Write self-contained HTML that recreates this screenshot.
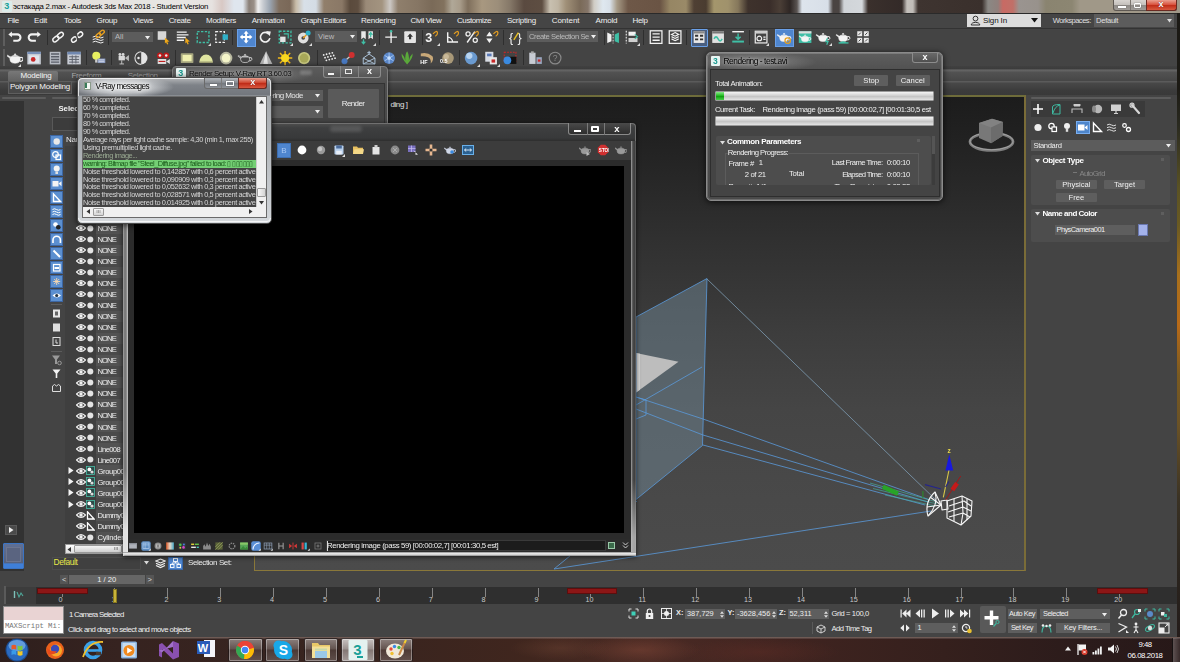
<!DOCTYPE html>
<html lang="ru"><head><meta charset="utf-8"><title>3ds Max</title>
<style>
html,body{margin:0;padding:0;}
body{width:1180px;height:662px;overflow:hidden;background:#444;position:relative;font-family:"Liberation Sans",sans-serif;}
#r{position:absolute;left:0;top:0;width:1180px;height:662px;overflow:hidden;filter:blur(0.45px);}
#r div,#r span,#r svg{position:absolute;box-sizing:border-box;}
#r span{white-space:pre;}
</style></head><body><div id="r">
<div style="left:0px;top:0px;width:1180px;height:13px;background:linear-gradient(90deg,#dedcd8 0px,#e8e6e3 170px,#e6e2e0 212px,#d8c8c4 222px,#dfe6ee 234px,#dfe6ee 243px,#8a8078 249px,#9a9088 254px,#f0f0f0 258px,#c8ccd2 263px,#9aa4b0 270px,#7f6e5e 279px,#7a6858 290px,#c8bca8 296px,#d8e0e8 304px,#d4dce4 316px,#917f6b 324px,#8a7866 342px,#5a4a3c 350px,#5e4e40 358px,#9a8a78 366px,#a39480 382px,#ccc8c4 390px,#8f7f6c 398px,#867664 418px,#7a6a58 432px,#82725e 444px,#b0a898 452px,#a89c8a 460px,#7f6f5c 468px,#a89880 482px,#9c8e7a 498px,#857868 510px,#5a4a40 524px,#5e4e42 542px,#c8c0b0 550px,#bfb5a3 558px,#a09078 566px,#7a6a58 580px,#85766a 588px,#d0ccc4 594px,#dfe8f0 603px,#d8e0e8 610px,#a69a86 617px,#6e5848 628px,#6a5444 660px,#968664 670px,#9a8a68 686px,#4f4034 694px,#4a3c30 706px,#a4966c 714px,#a0926c 728px,#86785c 738px,#3e322c 748px,#3a2e2a 770px,#4a3e36 780px,#2e2624 790px,#5a5452 797px,#dde4ec 802px,#d8dfe8 828px,#4a4442 833px,#4a4442 839px,#d0d4d8 844px,#d4d8dc 862px,#3a302c 868px,#332a28 902px,#c4c0bc 907px,#c0bcb8 913px,#3e3430 918px,#3a302c 982px,#8a8884 988px,#90807c 998px,#c86a64 1003px,#c07068 1013px,#9a9490 1019px,#98928c 1038px,#8a8470 1046px,#8c8672 1072px,#a09888 1080px,#a09888 1112px);"></div>
<div style="left:2px;top:1px;width:9.5px;height:10.5px;background:#dcecea;border-radius:1px;"></div>
<span style="left:4.2px;top:0.9px;font-size:9px;line-height:10.8px;color:#16a098;font-weight:700;">3</span>
<span style="left:13.0px;top:1.5px;font-size:7.8px;line-height:9.36px;color:#000;letter-spacing:-0.23px;">эстакада 2.max - Autodesk 3ds Max 2018 - Student Version</span>
<div style="left:1112.5px;top:0px;width:64px;height:10.5px;background:linear-gradient(#d8d4d0,#c4c0bc 48%,#8e8a86 52%,#a09c98);border:1px solid #5e5852;border-top:none;border-radius:0 0 3px 3px;"></div>
<div style="left:1146px;top:0px;width:30.5px;height:10.5px;background:linear-gradient(#eaa090,#d8503c 48%,#c02c18 52%,#d85a40);border:1px solid #6a2a22;border-top:none;border-radius:0 0 3px 0;"></div>
<div style="left:1129.5px;top:0px;width:1px;height:10px;background:#7a746e;"></div>
<div style="left:1118px;top:5.5px;width:7.5px;height:2px;background:#fff;box-shadow:0 0 1px #333;"></div>
<div style="left:1134px;top:2.5px;width:7px;height:5.5px;border:1.500px solid #fff;border-radius:1px;box-shadow:0 0 1px #333;"></div>
<span style="left:1158.5px;top:-0.6px;font-size:9px;line-height:10.8px;color:#fff;font-weight:700;text-shadow:0 0 1px #500;">x</span>
<div style="left:0px;top:12.5px;width:1180px;height:15px;background:#454545;border-top:1px solid #2a2a2a;"></div>
<span style="left:7.5px;top:15.8px;font-size:8px;line-height:9.6px;color:#f0f0f0;letter-spacing:-0.42px;">File</span>
<span style="left:34.0px;top:15.8px;font-size:8px;line-height:9.6px;color:#f0f0f0;letter-spacing:-0.20px;">Edit</span>
<span style="left:64.0px;top:15.8px;font-size:8px;line-height:9.6px;color:#f0f0f0;letter-spacing:-0.34px;">Tools</span>
<span style="left:96.6px;top:15.8px;font-size:8px;line-height:9.6px;color:#f0f0f0;letter-spacing:-0.37px;">Group</span>
<span style="left:133.0px;top:15.8px;font-size:8px;line-height:9.6px;color:#f0f0f0;letter-spacing:-0.24px;">Views</span>
<span style="left:168.7px;top:15.8px;font-size:8px;line-height:9.6px;color:#f0f0f0;letter-spacing:-0.37px;">Create</span>
<span style="left:206.0px;top:15.8px;font-size:8px;line-height:9.6px;color:#f0f0f0;letter-spacing:-0.27px;">Modifiers</span>
<span style="left:251.7px;top:15.8px;font-size:8px;line-height:9.6px;color:#f0f0f0;letter-spacing:-0.29px;">Animation</span>
<span style="left:300.7px;top:15.8px;font-size:8px;line-height:9.6px;color:#f0f0f0;letter-spacing:-0.31px;">Graph Editors</span>
<span style="left:361.0px;top:15.8px;font-size:8px;line-height:9.6px;color:#f0f0f0;letter-spacing:-0.26px;">Rendering</span>
<span style="left:410.5px;top:15.8px;font-size:8px;line-height:9.6px;color:#f0f0f0;letter-spacing:-0.35px;">Civil View</span>
<span style="left:457.0px;top:15.8px;font-size:8px;line-height:9.6px;color:#f0f0f0;letter-spacing:-0.42px;">Customize</span>
<span style="left:507.0px;top:15.8px;font-size:8px;line-height:9.6px;color:#f0f0f0;letter-spacing:-0.24px;">Scripting</span>
<span style="left:551.7px;top:15.8px;font-size:8px;line-height:9.6px;color:#f0f0f0;letter-spacing:-0.02px;">Content</span>
<span style="left:595.6px;top:15.8px;font-size:8px;line-height:9.6px;color:#f0f0f0;letter-spacing:-0.24px;">Arnold</span>
<span style="left:632.6px;top:15.8px;font-size:8px;line-height:9.6px;color:#f0f0f0;letter-spacing:-0.36px;">Help</span>
<div style="left:966.5px;top:13.5px;width:74.5px;height:13px;background:#dcdcdc;"></div>
<svg style="left:970px;top:14.5px;" width="11" height="11" viewBox="0 0 11 11"><circle cx="5.5" cy="3.6" r="2.4" fill="none" stroke="#333" stroke-width="1"/><path d="M1.2 10 C1.2 6.5 9.8 6.5 9.8 10Z" fill="none" stroke="#333" stroke-width="1"/></svg>
<span style="left:983.0px;top:15.5px;font-size:8px;line-height:9.6px;color:#111;letter-spacing:-0.13px;">Sign In</span>
<svg style="left:1031px;top:18px;" width="7" height="5" viewBox="0 0 7 5"><path d="M0 0H7L3.5 4.5Z" fill="#111"/></svg>
<span style="left:1052.7px;top:15.7px;font-size:7.6px;line-height:9.12px;color:#e0e0e0;letter-spacing:-0.52px;">Workspaces:</span>
<div style="left:1094px;top:14px;width:80px;height:12.5px;background:#5c5c5c;"></div>
<span style="left:1096.0px;top:15.7px;font-size:7.6px;line-height:9.12px;color:#e0e0e0;letter-spacing:-0.29px;">Default</span>
<svg style="left:1167px;top:19px;" width="5" height="4" viewBox="0 0 5 4"><path d="M0 0H5L2.5 3.5Z" fill="#ddd"/></svg>
<div style="left:0px;top:27.5px;width:1180px;height:40.5px;background:#444;"></div>
<div style="left:0px;top:27.5px;width:1180px;height:1px;background:#333;"></div>
<div style="left:3px;top:29px;width:2px;height:17px;background:#5e5e5e;"></div>
<div style="left:3px;top:49px;width:2px;height:17px;background:#5e5e5e;"></div>
<div style="left:3px;top:70px;width:2px;height:23px;background:#5a5a5a;"></div>
<div style="left:0px;top:66px;width:1180px;height:29px;background:linear-gradient(#404040 0,#3c3c3c 3px,#646464 3.8px,#626262 5px,#525252 6px,#4d4d4d 10px,#474747 14.5px,#5c5c5c 15.2px,#5a5a5a 16px,#484848 17px,#424242 21px,#3c3c3c 24px,#393939 29px);"></div>
<div style="left:8px;top:70.5px;width:49.5px;height:10px;background:linear-gradient(#787878,#636363);border-radius:2px 2px 0 0;"></div>
<span style="left:20.5px;top:70.5px;font-size:8px;line-height:9.6px;color:#f4f4f4;letter-spacing:-0.18px;">Modeling</span>
<span style="left:71.4px;top:70.5px;font-size:8px;line-height:9.6px;color:#a8a8a8;letter-spacing:-0.31px;">Freeform</span>
<span style="left:127.7px;top:70.5px;font-size:8px;line-height:9.6px;color:#a0a0a0;letter-spacing:-0.32px;">Selection</span>
<div style="left:8px;top:81px;width:64px;height:12.5px;background:#484848;border:1px solid #5e5e5e;"></div>
<span style="left:10.0px;top:81.9px;font-size:8px;line-height:9.6px;color:#f4f4f4;letter-spacing:-0.23px;">Polygon Modeling</span>
<div style="left:0px;top:98px;width:1180px;height:474px;background:#444;"></div>
<div style="left:0px;top:101px;width:24px;height:470px;background:#323232;"></div>
<div style="left:2px;top:97px;width:44px;height:2px;background:#5c5c5c;border-radius:1px;"></div>
<div style="left:52px;top:97px;width:70px;height:2px;background:#5c5c5c;border-radius:1px;"></div>
<span style="left:58.5px;top:103.6px;font-size:7.8px;line-height:9.36px;color:#f4f4f4;letter-spacing:-0.08px;font-weight:700;">Select</span>
<div style="left:52px;top:117px;width:76px;height:14px;background:#3c3c3c;border:1px solid #595959;"></div>
<span style="left:66.0px;top:135.2px;font-size:8px;line-height:9.6px;color:#eee;letter-spacing:-0.34px;">Name</span>
<div style="left:49.5px;top:135px;width:13.5px;height:13px;background:#5b8fd0;border:1px solid #3c66a3;"></div>
<div style="left:49.5px;top:149px;width:13.5px;height:13px;background:#5b8fd0;border:1px solid #3c66a3;"></div>
<div style="left:49.5px;top:163px;width:13.5px;height:13px;background:#5b8fd0;border:1px solid #3c66a3;"></div>
<div style="left:49.5px;top:177px;width:13.5px;height:13px;background:#5b8fd0;border:1px solid #3c66a3;"></div>
<div style="left:49.5px;top:191px;width:13.5px;height:13px;background:#5b8fd0;border:1px solid #3c66a3;"></div>
<div style="left:49.5px;top:205px;width:13.5px;height:13px;background:#5b8fd0;border:1px solid #3c66a3;"></div>
<div style="left:49.5px;top:219px;width:13.5px;height:13px;background:#5b8fd0;border:1px solid #3c66a3;"></div>
<div style="left:49.5px;top:233px;width:13.5px;height:13px;background:#5b8fd0;border:1px solid #3c66a3;"></div>
<div style="left:49.5px;top:247px;width:13.5px;height:13px;background:#5b8fd0;border:1px solid #3c66a3;"></div>
<div style="left:49.5px;top:261px;width:13.5px;height:13px;background:#5b8fd0;border:1px solid #3c66a3;"></div>
<div style="left:49.5px;top:275px;width:13.5px;height:13px;background:#5b8fd0;border:1px solid #3c66a3;"></div>
<div style="left:49.5px;top:289px;width:13.5px;height:13px;background:#5b8fd0;border:1px solid #3c66a3;"></div>
<svg style="left:49.5px;top:135px;" width="13.5" height="13" viewBox="0 0 13.5 13"><circle cx="6.7" cy="6.5" r="3.2" fill="#e8e8e8"/></svg>
<svg style="left:49.5px;top:149px;" width="13.5" height="13" viewBox="0 0 13.5 13"><circle cx="5.5" cy="5.5" r="2.8" fill="none" stroke="#fff" stroke-width="1.2"/><rect x="6" y="6" width="4.5" height="4.5" fill="none" stroke="#fff" stroke-width="1.2"/></svg>
<svg style="left:49.5px;top:163px;" width="13.5" height="13" viewBox="0 0 13.5 13"><circle cx="6.7" cy="5.5" r="3" fill="#f2f2f2"/><rect x="5.4" y="8.5" width="2.6" height="2.5" fill="#e0e0e0"/></svg>
<svg style="left:49.5px;top:177px;" width="13.5" height="13" viewBox="0 0 13.5 13"><rect x="2.5" y="4" width="6" height="5.5" fill="#f4f4f4"/><path d="M8.5 6.5L11.5 4.3V9.2Z" fill="#f4f4f4"/></svg>
<svg style="left:49.5px;top:191px;" width="13.5" height="13" viewBox="0 0 13.5 13"><path d="M3.5 3V10.5H10.5Z" fill="none" stroke="#fff" stroke-width="1.4"/></svg>
<svg style="left:49.5px;top:205px;" width="13.5" height="13" viewBox="0 0 13.5 13"><path d="M2.5 4.5q2-1.5 4 0t4 0M2.5 7q2-1.5 4 0t4 0M2.5 9.5q2-1.5 4 0t4 0" fill="none" stroke="#fff" stroke-width="1"/></svg>
<svg style="left:49.5px;top:219px;" width="13.5" height="13" viewBox="0 0 13.5 13"><circle cx="5.5" cy="5.5" r="2.3" fill="#fff"/><circle cx="8.3" cy="8.2" r="2.3" fill="#222"/></svg>
<svg style="left:49.5px;top:233px;" width="13.5" height="13" viewBox="0 0 13.5 13"><path d="M3 10V7a3.7 3.7 0 0 1 7.4 0V10" fill="none" stroke="#fff" stroke-width="1.6"/></svg>
<svg style="left:49.5px;top:247px;" width="13.5" height="13" viewBox="0 0 13.5 13"><path d="M3.5 3.5L10 10" stroke="#fff" stroke-width="2"/></svg>
<svg style="left:49.5px;top:261px;" width="13.5" height="13" viewBox="0 0 13.5 13"><rect x="3.5" y="3.5" width="6.5" height="6.5" fill="none" stroke="#fff" stroke-width="1.2"/><rect x="4.5" y="6" width="4.5" height="2" fill="#fff"/></svg>
<svg style="left:49.5px;top:275px;" width="13.5" height="13" viewBox="0 0 13.5 13"><path d="M6.7 3V10M3.2 6.5H10.2M4.2 4L9.2 9M9.2 4L4.2 9" stroke="#f8d8b0" stroke-width="0.9"/></svg>
<svg style="left:49.5px;top:289px;" width="13.5" height="13" viewBox="0 0 13.5 13"><path d="M2.5 6.5Q6.7 2.5 11 6.5Q6.7 10.5 2.5 6.5Z" fill="#fff"/><circle cx="6.7" cy="6.5" r="1.6" fill="#234"/></svg>
<div style="left:51px;top:304px;width:11px;height:1px;background:#5c5c5c;"></div>
<svg style="left:51px;top:308px;" width="11" height="11" viewBox="0 0 11 11"><rect x="2" y="1.5" width="7" height="8" fill="#e8e8e8"/><rect x="4" y="3.5" width="3" height="4" fill="#666"/></svg>
<svg style="left:51px;top:322px;" width="11" height="11" viewBox="0 0 11 11"><rect x="2" y="1.5" width="7" height="8" fill="#e0e0e0"/></svg>
<svg style="left:51px;top:336px;" width="11" height="11" viewBox="0 0 11 11"><rect x="2" y="1.5" width="7" height="8" fill="none" stroke="#ddd" stroke-width="1"/><path d="M5 3.5V7H7" stroke="#ddd" fill="none"/></svg>
<div style="left:51px;top:350.5px;width:11px;height:1px;background:#5c5c5c;"></div>
<svg style="left:51px;top:353.5px;" width="12" height="12" viewBox="0 0 12 12"><path d="M1 1.5H9L6 5.5V10H4V5.5Z" fill="#999"/><circle cx="8.5" cy="9" r="1.8" fill="none" stroke="#999" stroke-width="1"/></svg>
<svg style="left:51px;top:368px;" width="11" height="11" viewBox="0 0 11 11"><path d="M1.5 1.5H9.5L6.3 5.5V10H4.7V5.5Z" fill="#f4f4f4"/></svg>
<svg style="left:51px;top:382px;" width="11" height="11" viewBox="0 0 11 11"><path d="M1.5 9.5V4L3.5 2.5L5.5 4H5.5L7.5 2.5L9.5 4V9.5Z" fill="none" stroke="#ddd" stroke-width="1"/></svg>
<div style="left:65px;top:146px;width:58px;height:398px;background:#3f3f3f;"></div>
<div style="left:96px;top:222px;width:27px;height:322px;background:#4a4a4a;"></div>
<div style="left:96px;top:222.5px;width:27px;height:11px;background:#525252;"></div>
<svg style="left:76px;top:224px;" width="10" height="8" viewBox="0 0 10 8"><path d="M0.5 4Q5 -0.8 9.5 4Q5 8.8 0.5 4Z" fill="none" stroke="#f2f2f2" stroke-width="1.1"/><circle cx="5" cy="4" r="1.7" fill="#f2f2f2"/></svg>
<svg style="left:86px;top:223.5px;" width="9" height="9" viewBox="0 0 9 9"><circle cx="4.3" cy="4.5" r="3" fill="#e4e4e4"/></svg>
<span style="left:97.5px;top:223.7px;font-size:7.6px;line-height:9.12px;color:#f0f0f0;letter-spacing:-0.90px;">NONE</span>
<svg style="left:76px;top:235.04px;" width="10" height="8" viewBox="0 0 10 8"><path d="M0.5 4Q5 -0.8 9.5 4Q5 8.8 0.5 4Z" fill="none" stroke="#f2f2f2" stroke-width="1.1"/><circle cx="5" cy="4" r="1.7" fill="#f2f2f2"/></svg>
<svg style="left:86px;top:234.54px;" width="9" height="9" viewBox="0 0 9 9"><circle cx="4.3" cy="4.5" r="3" fill="#e4e4e4"/></svg>
<span style="left:97.5px;top:234.8px;font-size:7.6px;line-height:9.12px;color:#f0f0f0;letter-spacing:-0.90px;">NONE</span>
<div style="left:96px;top:244.58px;width:27px;height:11px;background:#525252;"></div>
<svg style="left:76px;top:246.08px;" width="10" height="8" viewBox="0 0 10 8"><path d="M0.5 4Q5 -0.8 9.5 4Q5 8.8 0.5 4Z" fill="none" stroke="#f2f2f2" stroke-width="1.1"/><circle cx="5" cy="4" r="1.7" fill="#f2f2f2"/></svg>
<svg style="left:86px;top:245.58px;" width="9" height="9" viewBox="0 0 9 9"><circle cx="4.3" cy="4.5" r="3" fill="#e4e4e4"/></svg>
<span style="left:97.5px;top:245.8px;font-size:7.6px;line-height:9.12px;color:#f0f0f0;letter-spacing:-0.90px;">NONE</span>
<svg style="left:76px;top:257.12px;" width="10" height="8" viewBox="0 0 10 8"><path d="M0.5 4Q5 -0.8 9.5 4Q5 8.8 0.5 4Z" fill="none" stroke="#f2f2f2" stroke-width="1.1"/><circle cx="5" cy="4" r="1.7" fill="#f2f2f2"/></svg>
<svg style="left:86px;top:256.62px;" width="9" height="9" viewBox="0 0 9 9"><circle cx="4.3" cy="4.5" r="3" fill="#e4e4e4"/></svg>
<span style="left:97.5px;top:256.9px;font-size:7.6px;line-height:9.12px;color:#f0f0f0;letter-spacing:-0.90px;">NONE</span>
<div style="left:96px;top:266.66px;width:27px;height:11px;background:#525252;"></div>
<svg style="left:76px;top:268.16px;" width="10" height="8" viewBox="0 0 10 8"><path d="M0.5 4Q5 -0.8 9.5 4Q5 8.8 0.5 4Z" fill="none" stroke="#f2f2f2" stroke-width="1.1"/><circle cx="5" cy="4" r="1.7" fill="#f2f2f2"/></svg>
<svg style="left:86px;top:267.66px;" width="9" height="9" viewBox="0 0 9 9"><circle cx="4.3" cy="4.5" r="3" fill="#e4e4e4"/></svg>
<span style="left:97.5px;top:267.9px;font-size:7.6px;line-height:9.12px;color:#f0f0f0;letter-spacing:-0.90px;">NONE</span>
<svg style="left:76px;top:279.2px;" width="10" height="8" viewBox="0 0 10 8"><path d="M0.5 4Q5 -0.8 9.5 4Q5 8.8 0.5 4Z" fill="none" stroke="#f2f2f2" stroke-width="1.1"/><circle cx="5" cy="4" r="1.7" fill="#f2f2f2"/></svg>
<svg style="left:86px;top:278.7px;" width="9" height="9" viewBox="0 0 9 9"><circle cx="4.3" cy="4.5" r="3" fill="#e4e4e4"/></svg>
<span style="left:97.5px;top:278.9px;font-size:7.6px;line-height:9.12px;color:#f0f0f0;letter-spacing:-0.90px;">NONE</span>
<div style="left:96px;top:288.74px;width:27px;height:11px;background:#525252;"></div>
<svg style="left:76px;top:290.24px;" width="10" height="8" viewBox="0 0 10 8"><path d="M0.5 4Q5 -0.8 9.5 4Q5 8.8 0.5 4Z" fill="none" stroke="#f2f2f2" stroke-width="1.1"/><circle cx="5" cy="4" r="1.7" fill="#f2f2f2"/></svg>
<svg style="left:86px;top:289.74px;" width="9" height="9" viewBox="0 0 9 9"><circle cx="4.3" cy="4.5" r="3" fill="#e4e4e4"/></svg>
<span style="left:97.5px;top:290.0px;font-size:7.6px;line-height:9.12px;color:#f0f0f0;letter-spacing:-0.90px;">NONE</span>
<svg style="left:76px;top:301.28px;" width="10" height="8" viewBox="0 0 10 8"><path d="M0.5 4Q5 -0.8 9.5 4Q5 8.8 0.5 4Z" fill="none" stroke="#f2f2f2" stroke-width="1.1"/><circle cx="5" cy="4" r="1.7" fill="#f2f2f2"/></svg>
<svg style="left:86px;top:300.78px;" width="9" height="9" viewBox="0 0 9 9"><circle cx="4.3" cy="4.5" r="3" fill="#e4e4e4"/></svg>
<span style="left:97.5px;top:301.0px;font-size:7.6px;line-height:9.12px;color:#f0f0f0;letter-spacing:-0.90px;">NONE</span>
<div style="left:96px;top:310.82px;width:27px;height:11px;background:#525252;"></div>
<svg style="left:76px;top:312.32px;" width="10" height="8" viewBox="0 0 10 8"><path d="M0.5 4Q5 -0.8 9.5 4Q5 8.8 0.5 4Z" fill="none" stroke="#f2f2f2" stroke-width="1.1"/><circle cx="5" cy="4" r="1.7" fill="#f2f2f2"/></svg>
<svg style="left:86px;top:311.82px;" width="9" height="9" viewBox="0 0 9 9"><circle cx="4.3" cy="4.5" r="3" fill="#e4e4e4"/></svg>
<span style="left:97.5px;top:312.1px;font-size:7.6px;line-height:9.12px;color:#f0f0f0;letter-spacing:-0.90px;">NONE</span>
<svg style="left:76px;top:323.36px;" width="10" height="8" viewBox="0 0 10 8"><path d="M0.5 4Q5 -0.8 9.5 4Q5 8.8 0.5 4Z" fill="none" stroke="#f2f2f2" stroke-width="1.1"/><circle cx="5" cy="4" r="1.7" fill="#f2f2f2"/></svg>
<svg style="left:86px;top:322.86px;" width="9" height="9" viewBox="0 0 9 9"><circle cx="4.3" cy="4.5" r="3" fill="#e4e4e4"/></svg>
<span style="left:97.5px;top:323.1px;font-size:7.6px;line-height:9.12px;color:#f0f0f0;letter-spacing:-0.90px;">NONE</span>
<div style="left:96px;top:332.9px;width:27px;height:11px;background:#525252;"></div>
<svg style="left:76px;top:334.4px;" width="10" height="8" viewBox="0 0 10 8"><path d="M0.5 4Q5 -0.8 9.5 4Q5 8.8 0.5 4Z" fill="none" stroke="#f2f2f2" stroke-width="1.1"/><circle cx="5" cy="4" r="1.7" fill="#f2f2f2"/></svg>
<svg style="left:86px;top:333.9px;" width="9" height="9" viewBox="0 0 9 9"><circle cx="4.3" cy="4.5" r="3" fill="#e4e4e4"/></svg>
<span style="left:97.5px;top:334.1px;font-size:7.6px;line-height:9.12px;color:#f0f0f0;letter-spacing:-0.90px;">NONE</span>
<svg style="left:76px;top:345.44px;" width="10" height="8" viewBox="0 0 10 8"><path d="M0.5 4Q5 -0.8 9.5 4Q5 8.8 0.5 4Z" fill="none" stroke="#f2f2f2" stroke-width="1.1"/><circle cx="5" cy="4" r="1.7" fill="#f2f2f2"/></svg>
<svg style="left:86px;top:344.94px;" width="9" height="9" viewBox="0 0 9 9"><circle cx="4.3" cy="4.5" r="3" fill="#e4e4e4"/></svg>
<span style="left:97.5px;top:345.2px;font-size:7.6px;line-height:9.12px;color:#f0f0f0;letter-spacing:-0.90px;">NONE</span>
<div style="left:96px;top:354.98px;width:27px;height:11px;background:#525252;"></div>
<svg style="left:76px;top:356.48px;" width="10" height="8" viewBox="0 0 10 8"><path d="M0.5 4Q5 -0.8 9.5 4Q5 8.8 0.5 4Z" fill="none" stroke="#f2f2f2" stroke-width="1.1"/><circle cx="5" cy="4" r="1.7" fill="#f2f2f2"/></svg>
<svg style="left:86px;top:355.98px;" width="9" height="9" viewBox="0 0 9 9"><circle cx="4.3" cy="4.5" r="3" fill="#e4e4e4"/></svg>
<span style="left:97.5px;top:356.2px;font-size:7.6px;line-height:9.12px;color:#f0f0f0;letter-spacing:-0.90px;">NONE</span>
<svg style="left:76px;top:367.52px;" width="10" height="8" viewBox="0 0 10 8"><path d="M0.5 4Q5 -0.8 9.5 4Q5 8.8 0.5 4Z" fill="none" stroke="#f2f2f2" stroke-width="1.1"/><circle cx="5" cy="4" r="1.7" fill="#f2f2f2"/></svg>
<svg style="left:86px;top:367.02px;" width="9" height="9" viewBox="0 0 9 9"><circle cx="4.3" cy="4.5" r="3" fill="#e4e4e4"/></svg>
<span style="left:97.5px;top:367.3px;font-size:7.6px;line-height:9.12px;color:#f0f0f0;letter-spacing:-0.90px;">NONE</span>
<div style="left:96px;top:377.06px;width:27px;height:11px;background:#525252;"></div>
<svg style="left:76px;top:378.56px;" width="10" height="8" viewBox="0 0 10 8"><path d="M0.5 4Q5 -0.8 9.5 4Q5 8.8 0.5 4Z" fill="none" stroke="#f2f2f2" stroke-width="1.1"/><circle cx="5" cy="4" r="1.7" fill="#f2f2f2"/></svg>
<svg style="left:86px;top:378.06px;" width="9" height="9" viewBox="0 0 9 9"><circle cx="4.3" cy="4.5" r="3" fill="#e4e4e4"/></svg>
<span style="left:97.5px;top:378.3px;font-size:7.6px;line-height:9.12px;color:#f0f0f0;letter-spacing:-0.90px;">NONE</span>
<svg style="left:76px;top:389.6px;" width="10" height="8" viewBox="0 0 10 8"><path d="M0.5 4Q5 -0.8 9.5 4Q5 8.8 0.5 4Z" fill="none" stroke="#f2f2f2" stroke-width="1.1"/><circle cx="5" cy="4" r="1.7" fill="#f2f2f2"/></svg>
<svg style="left:86px;top:389.1px;" width="9" height="9" viewBox="0 0 9 9"><circle cx="4.3" cy="4.5" r="3" fill="#e4e4e4"/></svg>
<span style="left:97.5px;top:389.3px;font-size:7.6px;line-height:9.12px;color:#f0f0f0;letter-spacing:-0.90px;">NONE</span>
<div style="left:96px;top:399.14px;width:27px;height:11px;background:#525252;"></div>
<svg style="left:76px;top:400.64px;" width="10" height="8" viewBox="0 0 10 8"><path d="M0.5 4Q5 -0.8 9.5 4Q5 8.8 0.5 4Z" fill="none" stroke="#f2f2f2" stroke-width="1.1"/><circle cx="5" cy="4" r="1.7" fill="#f2f2f2"/></svg>
<svg style="left:86px;top:400.14px;" width="9" height="9" viewBox="0 0 9 9"><circle cx="4.3" cy="4.5" r="3" fill="#e4e4e4"/></svg>
<span style="left:97.5px;top:400.4px;font-size:7.6px;line-height:9.12px;color:#f0f0f0;letter-spacing:-0.90px;">NONE</span>
<svg style="left:76px;top:411.68px;" width="10" height="8" viewBox="0 0 10 8"><path d="M0.5 4Q5 -0.8 9.5 4Q5 8.8 0.5 4Z" fill="none" stroke="#f2f2f2" stroke-width="1.1"/><circle cx="5" cy="4" r="1.7" fill="#f2f2f2"/></svg>
<svg style="left:86px;top:411.18px;" width="9" height="9" viewBox="0 0 9 9"><circle cx="4.3" cy="4.5" r="3" fill="#e4e4e4"/></svg>
<span style="left:97.5px;top:411.4px;font-size:7.6px;line-height:9.12px;color:#f0f0f0;letter-spacing:-0.90px;">NONE</span>
<div style="left:96px;top:421.22px;width:27px;height:11px;background:#525252;"></div>
<svg style="left:76px;top:422.72px;" width="10" height="8" viewBox="0 0 10 8"><path d="M0.5 4Q5 -0.8 9.5 4Q5 8.8 0.5 4Z" fill="none" stroke="#f2f2f2" stroke-width="1.1"/><circle cx="5" cy="4" r="1.7" fill="#f2f2f2"/></svg>
<svg style="left:86px;top:422.22px;" width="9" height="9" viewBox="0 0 9 9"><circle cx="4.3" cy="4.5" r="3" fill="#e4e4e4"/></svg>
<span style="left:97.5px;top:422.5px;font-size:7.6px;line-height:9.12px;color:#f0f0f0;letter-spacing:-0.90px;">NONE</span>
<svg style="left:76px;top:433.76px;" width="10" height="8" viewBox="0 0 10 8"><path d="M0.5 4Q5 -0.8 9.5 4Q5 8.8 0.5 4Z" fill="none" stroke="#f2f2f2" stroke-width="1.1"/><circle cx="5" cy="4" r="1.7" fill="#f2f2f2"/></svg>
<svg style="left:86px;top:433.26px;" width="9" height="9" viewBox="0 0 9 9"><circle cx="4.3" cy="4.5" r="3" fill="#e4e4e4"/></svg>
<span style="left:97.5px;top:433.5px;font-size:7.6px;line-height:9.12px;color:#f0f0f0;letter-spacing:-0.90px;">NONE</span>
<div style="left:96px;top:443.3px;width:27px;height:11px;background:#525252;"></div>
<svg style="left:76px;top:444.8px;" width="10" height="8" viewBox="0 0 10 8"><path d="M0.5 4Q5 -0.8 9.5 4Q5 8.8 0.5 4Z" fill="none" stroke="#f2f2f2" stroke-width="1.1"/><circle cx="5" cy="4" r="1.7" fill="#f2f2f2"/></svg>
<svg style="left:86px;top:444.3px;" width="9" height="9" viewBox="0 0 9 9"><circle cx="4.3" cy="4.5" r="3" fill="#e4e4e4"/></svg>
<span style="left:97.5px;top:444.5px;font-size:7.6px;line-height:9.12px;color:#f0f0f0;letter-spacing:-0.65px;">Line008</span>
<svg style="left:76px;top:455.84px;" width="10" height="8" viewBox="0 0 10 8"><path d="M0.5 4Q5 -0.8 9.5 4Q5 8.8 0.5 4Z" fill="none" stroke="#f2f2f2" stroke-width="1.1"/><circle cx="5" cy="4" r="1.7" fill="#f2f2f2"/></svg>
<svg style="left:86px;top:455.34px;" width="9" height="9" viewBox="0 0 9 9"><circle cx="4.3" cy="4.5" r="3" fill="#e4e4e4"/></svg>
<span style="left:97.5px;top:455.6px;font-size:7.6px;line-height:9.12px;color:#f0f0f0;letter-spacing:-0.65px;">Line007</span>
<div style="left:96px;top:465.38px;width:27px;height:11px;background:#525252;"></div>
<svg style="left:76px;top:466.88px;" width="10" height="8" viewBox="0 0 10 8"><path d="M0.5 4Q5 -0.8 9.5 4Q5 8.8 0.5 4Z" fill="none" stroke="#f2f2f2" stroke-width="1.1"/><circle cx="5" cy="4" r="1.7" fill="#f2f2f2"/></svg>
<svg style="left:68px;top:467.38px;" width="6" height="7" viewBox="0 0 6 7"><path d="M0.5 0L5.5 3.5L0.5 7Z" fill="#f4f4f4"/></svg>
<svg style="left:86px;top:466.38px;" width="9" height="9" viewBox="0 0 9 9"><rect x="0.5" y="0.5" width="8" height="8" fill="#2e4a48" stroke="#4ac0a8" stroke-width="0.8"/><circle cx="3.4" cy="3.4" r="1.9" fill="#fff"/><circle cx="6" cy="6" r="1.6" fill="#ddd"/></svg>
<span style="left:97.5px;top:466.6px;font-size:7.6px;line-height:9.12px;color:#f0f0f0;letter-spacing:-0.37px;">Group00</span>
<svg style="left:76px;top:477.92px;" width="10" height="8" viewBox="0 0 10 8"><path d="M0.5 4Q5 -0.8 9.5 4Q5 8.8 0.5 4Z" fill="none" stroke="#f2f2f2" stroke-width="1.1"/><circle cx="5" cy="4" r="1.7" fill="#f2f2f2"/></svg>
<svg style="left:68px;top:478.42px;" width="6" height="7" viewBox="0 0 6 7"><path d="M0.5 0L5.5 3.5L0.5 7Z" fill="#f4f4f4"/></svg>
<svg style="left:86px;top:477.42px;" width="9" height="9" viewBox="0 0 9 9"><rect x="0.5" y="0.5" width="8" height="8" fill="#2e4a48" stroke="#4ac0a8" stroke-width="0.8"/><circle cx="3.4" cy="3.4" r="1.9" fill="#fff"/><circle cx="6" cy="6" r="1.6" fill="#ddd"/></svg>
<span style="left:97.5px;top:477.7px;font-size:7.6px;line-height:9.12px;color:#f0f0f0;letter-spacing:-0.37px;">Group00</span>
<div style="left:96px;top:487.46px;width:27px;height:11px;background:#525252;"></div>
<svg style="left:76px;top:488.96px;" width="10" height="8" viewBox="0 0 10 8"><path d="M0.5 4Q5 -0.8 9.5 4Q5 8.8 0.5 4Z" fill="none" stroke="#f2f2f2" stroke-width="1.1"/><circle cx="5" cy="4" r="1.7" fill="#f2f2f2"/></svg>
<svg style="left:68px;top:489.46px;" width="6" height="7" viewBox="0 0 6 7"><path d="M0.5 0L5.5 3.5L0.5 7Z" fill="#f4f4f4"/></svg>
<svg style="left:86px;top:488.46px;" width="9" height="9" viewBox="0 0 9 9"><rect x="0.5" y="0.5" width="8" height="8" fill="#2e4a48" stroke="#4ac0a8" stroke-width="0.8"/><circle cx="3.4" cy="3.4" r="1.9" fill="#fff"/><circle cx="6" cy="6" r="1.6" fill="#ddd"/></svg>
<span style="left:97.5px;top:488.7px;font-size:7.6px;line-height:9.12px;color:#f0f0f0;letter-spacing:-0.37px;">Group00</span>
<svg style="left:76px;top:500px;" width="10" height="8" viewBox="0 0 10 8"><path d="M0.5 4Q5 -0.8 9.5 4Q5 8.8 0.5 4Z" fill="none" stroke="#f2f2f2" stroke-width="1.1"/><circle cx="5" cy="4" r="1.7" fill="#f2f2f2"/></svg>
<svg style="left:68px;top:500.5px;" width="6" height="7" viewBox="0 0 6 7"><path d="M0.5 0L5.5 3.5L0.5 7Z" fill="#f4f4f4"/></svg>
<svg style="left:86px;top:499.5px;" width="9" height="9" viewBox="0 0 9 9"><rect x="0.5" y="0.5" width="8" height="8" fill="#2e4a48" stroke="#4ac0a8" stroke-width="0.8"/><circle cx="3.4" cy="3.4" r="1.9" fill="#fff"/><circle cx="6" cy="6" r="1.6" fill="#ddd"/></svg>
<span style="left:97.5px;top:499.7px;font-size:7.6px;line-height:9.12px;color:#f0f0f0;letter-spacing:-0.37px;">Group00</span>
<div style="left:96px;top:509.54px;width:27px;height:11px;background:#525252;"></div>
<svg style="left:76px;top:511.04px;" width="10" height="8" viewBox="0 0 10 8"><path d="M0.5 4Q5 -0.8 9.5 4Q5 8.8 0.5 4Z" fill="none" stroke="#f2f2f2" stroke-width="1.1"/><circle cx="5" cy="4" r="1.7" fill="#f2f2f2"/></svg>
<svg style="left:86px;top:510.54px;" width="9" height="9" viewBox="0 0 9 9"><path d="M1.5 0.8V8H8.2Z" fill="none" stroke="#fff" stroke-width="1.3"/></svg>
<span style="left:97.5px;top:510.8px;font-size:7.6px;line-height:9.12px;color:#f0f0f0;letter-spacing:-0.65px;">Dummy0</span>
<svg style="left:76px;top:522.08px;" width="10" height="8" viewBox="0 0 10 8"><path d="M0.5 4Q5 -0.8 9.5 4Q5 8.8 0.5 4Z" fill="none" stroke="#f2f2f2" stroke-width="1.1"/><circle cx="5" cy="4" r="1.7" fill="#f2f2f2"/></svg>
<svg style="left:86px;top:521.58px;" width="9" height="9" viewBox="0 0 9 9"><path d="M1.5 0.8V8H8.2Z" fill="none" stroke="#fff" stroke-width="1.3"/></svg>
<span style="left:97.5px;top:521.8px;font-size:7.6px;line-height:9.12px;color:#f0f0f0;letter-spacing:-0.65px;">Dummy0</span>
<div style="left:96px;top:531.62px;width:27px;height:11px;background:#525252;"></div>
<svg style="left:76px;top:533.12px;" width="10" height="8" viewBox="0 0 10 8"><path d="M0.5 4Q5 -0.8 9.5 4Q5 8.8 0.5 4Z" fill="none" stroke="#f2f2f2" stroke-width="1.1"/><circle cx="5" cy="4" r="1.7" fill="#f2f2f2"/></svg>
<svg style="left:86px;top:532.62px;" width="9" height="9" viewBox="0 0 9 9"><circle cx="4.3" cy="4.5" r="3" fill="#e4e4e4"/></svg>
<span style="left:97.5px;top:532.9px;font-size:7.6px;line-height:9.12px;color:#f0f0f0;letter-spacing:-0.23px;">Cylinder</span>
<div style="left:123px;top:222px;width:2px;height:322px;background:#6a6a6a;"></div>
<div style="left:65px;top:544px;width:58px;height:10px;background:linear-gradient(#fdfdfd,#dcdcdc);border:1px solid #9a9a9a;"></div>
<svg style="left:67px;top:546.5px;" width="4" height="5" viewBox="0 0 4 5"><path d="M4 0V5L0.5 2.5Z" fill="#333"/></svg>
<div style="left:74px;top:545px;width:48px;height:8px;background:linear-gradient(#f4f4f4,#cfcfcf);border:1px solid #999;border-radius:1px;"></div>
<span style="left:113.5px;top:545.0px;font-size:6px;line-height:7.2px;color:#666;">ııı</span>
<div style="left:4.5px;top:525px;width:12px;height:10px;background:#4a4a4a;border:1px solid #5a5a5a;"></div>
<svg style="left:8px;top:527px;" width="6" height="6" viewBox="0 0 6 6"><path d="M1 0L5.5 3L1 6Z" fill="#eee"/></svg>
<div style="left:3px;top:543px;width:21px;height:26px;background:linear-gradient(#5f6f94 0,#55627f 80%,#3f7fd8 82%,#3f7fd8);border:1px solid #3b74c4;border-radius:1px;"></div>
<div style="left:6px;top:547px;width:15px;height:15px;background:#5a6480;border:1px solid #6c7590;"></div>
<div style="left:52px;top:556.5px;width:89px;height:13px;background:#404040;border:1px solid #4c4c4c;"></div>
<span style="left:53.5px;top:557.3px;font-size:8.4px;line-height:10.08px;color:#e8e84a;letter-spacing:-0.36px;">Default</span>
<svg style="left:143.5px;top:561px;" width="5" height="4" viewBox="0 0 5 4"><path d="M0 0H5L2.5 3.5Z" fill="#ddd"/></svg>
<svg style="left:155px;top:557.5px;" width="11" height="11" viewBox="0 0 11 11"><path d="M5.5 1L10 3L5.5 5L1 3Z M1 5.3L5.5 7.3L10 5.3 M1 7.6L5.5 9.6L10 7.6" fill="none" stroke="#f0f0f0" stroke-width="1.1"/></svg>
<div style="left:168px;top:556.5px;width:15px;height:13px;background:#4f86cf;border:1px solid #3a68a8;"></div>
<svg style="left:170px;top:558px;" width="11" height="10" viewBox="0 0 11 10"><rect x="3.5" y="0.5" width="4" height="3" fill="none" stroke="#fff" stroke-width="0.9"/><rect x="0.5" y="6.5" width="3.5" height="3" fill="none" stroke="#fff" stroke-width="0.9"/><rect x="7" y="6.5" width="3.5" height="3" fill="none" stroke="#fff" stroke-width="0.9"/><path d="M5.5 3.5V5H2.2V6.5M5.5 5H8.8V6.5" stroke="#fff" fill="none" stroke-width="0.9"/></svg>
<span style="left:188.0px;top:557.5px;font-size:8px;line-height:9.6px;color:#eee;letter-spacing:-0.42px;">Selection Set:</span>
<div style="left:254px;top:94.5px;width:772px;height:476.5px;background:linear-gradient(#1c1c1c 0,#222 10%,#303030 30%,#3d3d3d 50%,#454545 66%,#494949 85%,#4b4b4b 100%);border:1.5px solid #8a783a;border-right:2px solid #7a6c38;border-top:2px solid #6e6c3a;"></div>
<span style="left:390.5px;top:100.2px;font-size:8px;line-height:9.6px;color:#e0e0e0;letter-spacing:-0.43px;">ding ]</span>
<svg style="left:125px;top:97px;" width="901" height="474" viewBox="0 0 901 474">
<polygon points="511,220 582,181.500 577.500,348.500 511,402.500" fill="#6b808c" fill-opacity="0.55"/>
<polygon points="511,256 553.500,264.700 511,295.600" fill="#bdbdbd"/><polygon points="511,256 515,256.800 515,292.800 511,295.600" fill="#d6d6d6"/>
<g fill="none" stroke="#5a9ada" stroke-width="0.9" stroke-opacity="0.9">
<path d="M511,402.500 L511,220 L582,181.500 L577.500,348.500 L511,402.500"/>
<path d="M577,270 L511,308"/>
<path d="M511,300 L578,322 L805,403"/>
<path d="M511,312 L578,338 L803,405"/>
<path d="M578,348 L800,408"/>
<path d="M429,472 L512,404"/>
<path d="M429,472 L806,414"/>
<path d="M511,300 L521,303 L521,318 L511,322"/>
</g>

<path d="M745,386 L812,405 M748,391.500 L812,407 M760,398 L810,409" stroke="#45b0a0" stroke-width="0.800" fill="none" stroke-opacity=".8"/>
<path d="M757.800,389.800 L773,396.600" stroke="#28a428" stroke-width="4.500"/>
<path d="M582,182 L812,404" stroke="#7f9db4" stroke-width="0.800" fill="none"/>
<!-- camera -->
<g fill="none" stroke="#f6f6f6" stroke-width="1.100" stroke-linejoin="round">
<path d="M816,408 L810,395 Q799,405 803,419 Z"/>
<path d="M816,408 L805,400 M816,408 L802,410 M810,395 Q814,407 803,419"/>
<path d="M816,404 L822,403 L823,412 L817,413 Z"/>
<path d="M822,404 L837,399 L847,404 L846,419 L836,428 L822,421 Z"/>
<path d="M824,409 L839,404 L846,409 M823,415 L838,410 L846,414 M824,420 L838,416 L845,420 M837,399 L838,416 L836,428 M829,402 L829,424 M842,402 L842,423"/>
</g>
<!-- gizmo -->
<path d="M824,373 L818.300,400.400" stroke="#d8c84a" stroke-width="1.100"/>
<path d="M824.300,357.400 L828.200,373.400 L820.400,373.400 Z" fill="#1818e0"/>
<path d="M800,387.600 L816,392 M820.500,390 L824,384.500" stroke="#26268a" stroke-width="1.100"/>
<path d="M797.900,394 L797.900,401" stroke="#2a8a2a" stroke-width="1.100"/>
<path d="M820.600,403 L835.700,379" stroke="#a01818" stroke-width="1"/>
<path d="M827.300,393 L832,386.300" stroke="#c41a1a" stroke-width="4.600"/>
<!-- viewcube -->
<ellipse cx="866.5" cy="44.8" rx="21.5" ry="8.6" fill="none" stroke="#7c7c7c" stroke-width="2.8"/>
<ellipse cx="866.5" cy="44.2" rx="21.5" ry="8.6" fill="none" stroke="#b0b0b0" stroke-width="0.7"/>
<path d="M854,26 L867,21.8 L878,25 L877.5,39 L866,46.3 L854,41 Z" fill="#787878"/>
<path d="M854,26 L867,21.8 L878,25 L866,30.5 Z" fill="#828282"/>
<path d="M866,30.5 L878,25 L877.5,39 L866,46.3 Z" fill="#6c6c6c"/>
<text x="822.500" y="356" font-size="6.500" font-weight="700" fill="#e8d84a" font-family="Liberation Sans, sans-serif">z</text></svg>
<div style="left:1026px;top:97px;width:154px;height:476px;background:#444;"></div>
<div style="left:1031px;top:97px;width:140px;height:2px;background:#5c5c5c;border-radius:1px;"></div>
<div style="left:1031px;top:101px;width:113.5px;height:16px;background:#3a3a3a;"></div>
<svg style="left:1031px;top:101px;" width="114" height="16" viewBox="0 0 114 16">
<path d="M7 3V13M2 8H12" stroke="#fff" stroke-width="1.6"/>
<path d="M21.5 13V6Q21.5 3.5 29 3.5V13Z" fill="none" stroke="#3fb8a0" stroke-width="1"/><path d="M22 12Q24 5 29 4" fill="none" stroke="#3fb8a0" stroke-width="1"/>
<path d="M42 4H50M41 12V8H51V12" stroke="#bbb" fill="none" stroke-width="1.1"/><rect x="43" y="3" width="6" height="2.5" fill="#ccc"/>
<circle cx="67" cy="8" r="4.2" fill="#b8b8b8"/><ellipse cx="63" cy="8" rx="2" ry="3.5" fill="#8a8a8a"/>
<rect x="80" y="3.5" width="10" height="6.5" fill="#d0d0d0"/><path d="M83 12.5H87M85 10V12.5" stroke="#d0d0d0" stroke-width="1.2"/>
<path d="M101 4L108 12" stroke="#d8d8d8" stroke-width="2.2" stroke-linecap="round"/><circle cx="101" cy="4.2" r="2" fill="none" stroke="#d8d8d8" stroke-width="1.2"/>
</svg>
<div style="left:1075.5px;top:120.5px;width:14px;height:13.5px;background:#4e86cc;border:1px solid #79aef0;"></div>
<svg style="left:1031px;top:119px;" width="114" height="17" viewBox="0 0 114 17">
<circle cx="7" cy="8.5" r="3.6" fill="#eee"/>
<circle cx="20.5" cy="7" r="2.7" fill="none" stroke="#fff" stroke-width="1.3"/><rect x="21" y="8" width="4.5" height="4.5" fill="#444" stroke="#fff" stroke-width="1.2"/>
<circle cx="36" cy="7" r="3" fill="#f0f0f0"/><rect x="34.8" y="10" width="2.4" height="2.8" fill="#ddd"/>
<rect x="47" y="5.5" width="6.5" height="6" fill="#fff"/><path d="M53.5 8.5L56.5 6V11Z" fill="#fff"/>
<path d="M62.5 4V12.5H70.5Z" fill="none" stroke="#fff" stroke-width="1.4"/>
<path d="M76 6q2.2-1.6 4.5 0t4.500 0M76 8.700q2.2-1.6 4.5 0t4.500 0M76 11.4q2.2-1.6 4.5 0t4.500 0" fill="none" stroke="#eee" stroke-width="0.9"/>
<circle cx="93.500" cy="6.5" r="1.8" fill="none" stroke="#fff" stroke-width="1.2"/><circle cx="97.500" cy="10.5" r="2" fill="none" stroke="#fff" stroke-width="1.3"/>
</svg>
<div style="left:1031px;top:139.5px;width:143.5px;height:11.5px;background:#5c5c5c;"></div>
<span style="left:1033.5px;top:140.9px;font-size:7.6px;line-height:9.12px;color:#eee;letter-spacing:-0.35px;">Standard</span>
<svg style="left:1165.5px;top:143.5px;" width="5" height="4" viewBox="0 0 5 4"><path d="M0 0H5L2.5 3.5Z" fill="#eee"/></svg>
<div style="left:1031px;top:154.5px;width:139px;height:50.5px;background:#4d4d4d;border-radius:2px;"></div>
<svg style="left:1035px;top:158.5px;" width="5" height="4" viewBox="0 0 5 4"><path d="M0 0H5L2.5 3.5Z" fill="#ddd"/></svg>
<span style="left:1042.5px;top:155.8px;font-size:8px;line-height:9.6px;color:#fff;letter-spacing:-0.38px;font-weight:700;">Object Type</span>
<div style="left:1161px;top:158px;width:3px;height:3px;background:#5e5e5e;"></div>
<div style="left:1073px;top:172px;width:4px;height:1px;background:#777;"></div>
<span style="left:1079.4px;top:168.6px;font-size:7.6px;line-height:9.12px;color:#888;letter-spacing:-0.56px;">AutoGrid</span>
<div style="left:1056px;top:180px;width:40.6px;height:9px;background:#5e5e5e;border-radius:1px;"></div>
<span style="left:1062.2px;top:180.1px;font-size:7.6px;line-height:9.12px;color:#f0f0f0;">Physical</span>
<div style="left:1104.3px;top:180px;width:40.6px;height:9px;background:#5e5e5e;border-radius:1px;"></div>
<span style="left:1114.0px;top:180.1px;font-size:7.6px;line-height:9.12px;color:#f0f0f0;">Target</span>
<div style="left:1056px;top:192.8px;width:40.6px;height:9px;background:#5e5e5e;border-radius:1px;"></div>
<span style="left:1068.5px;top:192.9px;font-size:7.6px;line-height:9.12px;color:#f0f0f0;">Free</span>
<div style="left:1031px;top:208.5px;width:139px;height:33px;background:#4d4d4d;border-radius:2px;"></div>
<svg style="left:1035px;top:212px;" width="5" height="4" viewBox="0 0 5 4"><path d="M0 0H5L2.5 3.5Z" fill="#ddd"/></svg>
<span style="left:1042.5px;top:209.4px;font-size:8px;line-height:9.6px;color:#fff;letter-spacing:-0.49px;font-weight:700;">Name and Color</span>
<div style="left:1161px;top:211.5px;width:3px;height:3px;background:#5e5e5e;"></div>
<div style="left:1055px;top:225.4px;width:79.5px;height:9.5px;background:#5e5e5e;"></div>
<span style="left:1056.5px;top:225.8px;font-size:7.4px;line-height:8.88px;color:#f0f0f0;letter-spacing:-0.54px;">PhysCamera001</span>
<div style="left:1137.7px;top:223.7px;width:10px;height:12.3px;background:#a3b2ea;border:1px solid #6a78b0;"></div>
<div style="left:0px;top:571.5px;width:1180px;height:66px;background:#444;"></div>
<div style="left:60.3px;top:574.5px;width:8px;height:9.5px;background:#555;"></div>
<span style="left:62.1px;top:574.8px;font-size:7.5px;line-height:9px;color:#ddd;">&lt;</span>
<div style="left:69px;top:574.5px;width:75.5px;height:9.5px;background:#666;"></div>
<span style="left:97.2px;top:574.7px;font-size:7.6px;line-height:9.12px;color:#f0f0f0;">1 / 20</span>
<div style="left:145.5px;top:574.5px;width:8.5px;height:9.5px;background:#555;"></div>
<span style="left:147.5px;top:574.8px;font-size:7.5px;line-height:9px;color:#ddd;">&gt;</span>
<div style="left:4px;top:586px;width:2px;height:18px;background:#5a5a5a;"></div>
<div style="left:35.5px;top:587px;width:1144.5px;height:16.5px;background:#2f2f2f;"></div>
<div style="left:6px;top:587px;width:29.5px;height:16.5px;background:#3c3c3c;"></div>
<svg style="left:13px;top:590px;" width="12" height="9" viewBox="0 0 12 9"><path d="M1.5 1V8" stroke="#7fbfb8" stroke-width="1.4"/><path d="M4 2L6 7L8 3L10 6" stroke="#4fa89a" stroke-width="1.1" fill="none"/></svg>
<div style="left:61.6px;top:587.5px;width:1px;height:9.5px;background:#858585;"></div>
<span style="left:58.6px;top:595.5px;font-size:7.2px;line-height:8.64px;color:#c8c8c8;">0</span>
<div style="left:114.48px;top:587.5px;width:1px;height:9.5px;background:#858585;"></div>
<span style="left:111.5px;top:595.5px;font-size:7.2px;line-height:8.64px;color:#c8c8c8;">1</span>
<div style="left:167.36px;top:587.5px;width:1px;height:9.5px;background:#858585;"></div>
<span style="left:164.4px;top:595.5px;font-size:7.2px;line-height:8.64px;color:#c8c8c8;">2</span>
<div style="left:220.24px;top:587.5px;width:1px;height:9.5px;background:#858585;"></div>
<span style="left:217.2px;top:595.5px;font-size:7.2px;line-height:8.64px;color:#c8c8c8;">3</span>
<div style="left:273.12px;top:587.5px;width:1px;height:9.5px;background:#858585;"></div>
<span style="left:270.1px;top:595.5px;font-size:7.2px;line-height:8.64px;color:#c8c8c8;">4</span>
<div style="left:326px;top:587.5px;width:1px;height:9.5px;background:#858585;"></div>
<span style="left:323.0px;top:595.5px;font-size:7.2px;line-height:8.64px;color:#c8c8c8;">5</span>
<div style="left:378.88px;top:587.5px;width:1px;height:9.5px;background:#858585;"></div>
<span style="left:375.9px;top:595.5px;font-size:7.2px;line-height:8.64px;color:#c8c8c8;">6</span>
<div style="left:431.76px;top:587.5px;width:1px;height:9.5px;background:#858585;"></div>
<span style="left:428.8px;top:595.5px;font-size:7.2px;line-height:8.64px;color:#c8c8c8;">7</span>
<div style="left:484.64px;top:587.5px;width:1px;height:9.5px;background:#858585;"></div>
<span style="left:481.6px;top:595.5px;font-size:7.2px;line-height:8.64px;color:#c8c8c8;">8</span>
<div style="left:537.52px;top:587.5px;width:1px;height:9.5px;background:#858585;"></div>
<span style="left:534.5px;top:595.5px;font-size:7.2px;line-height:8.64px;color:#c8c8c8;">9</span>
<div style="left:590.4px;top:587.5px;width:1px;height:9.5px;background:#858585;"></div>
<span style="left:585.4px;top:595.5px;font-size:7.2px;line-height:8.64px;color:#c8c8c8;">10</span>
<div style="left:643.28px;top:587.5px;width:1px;height:9.5px;background:#858585;"></div>
<span style="left:638.5px;top:595.5px;font-size:7.2px;line-height:8.64px;color:#c8c8c8;">11</span>
<div style="left:696.16px;top:587.5px;width:1px;height:9.5px;background:#858585;"></div>
<span style="left:691.2px;top:595.5px;font-size:7.2px;line-height:8.64px;color:#c8c8c8;">12</span>
<div style="left:749.04px;top:587.5px;width:1px;height:9.5px;background:#858585;"></div>
<span style="left:744.0px;top:595.5px;font-size:7.2px;line-height:8.64px;color:#c8c8c8;">13</span>
<div style="left:801.92px;top:587.5px;width:1px;height:9.5px;background:#858585;"></div>
<span style="left:796.9px;top:595.5px;font-size:7.2px;line-height:8.64px;color:#c8c8c8;">14</span>
<div style="left:854.8px;top:587.5px;width:1px;height:9.5px;background:#858585;"></div>
<span style="left:849.8px;top:595.5px;font-size:7.2px;line-height:8.64px;color:#c8c8c8;">15</span>
<div style="left:907.68px;top:587.5px;width:1px;height:9.5px;background:#858585;"></div>
<span style="left:902.7px;top:595.5px;font-size:7.2px;line-height:8.64px;color:#c8c8c8;">16</span>
<div style="left:960.56px;top:587.5px;width:1px;height:9.5px;background:#858585;"></div>
<span style="left:955.6px;top:595.5px;font-size:7.2px;line-height:8.64px;color:#c8c8c8;">17</span>
<div style="left:1013.44px;top:587.5px;width:1px;height:9.5px;background:#858585;"></div>
<span style="left:1008.4px;top:595.5px;font-size:7.2px;line-height:8.64px;color:#c8c8c8;">18</span>
<div style="left:1066.32px;top:587.5px;width:1px;height:9.5px;background:#858585;"></div>
<span style="left:1061.3px;top:595.5px;font-size:7.2px;line-height:8.64px;color:#c8c8c8;">19</span>
<div style="left:1119.2px;top:587.5px;width:1px;height:9.5px;background:#858585;"></div>
<span style="left:1114.2px;top:595.5px;font-size:7.2px;line-height:8.64px;color:#c8c8c8;">20</span>
<div style="left:36.9px;top:588px;width:50.8px;height:6.3px;background:#8c1616;border:1px solid #5c0e0e;"></div>
<div style="left:566.5px;top:588px;width:50.8px;height:6.3px;background:#8c1616;border:1px solid #5c0e0e;"></div>
<div style="left:1096.5px;top:588px;width:51px;height:6.3px;background:#8c1616;border:1px solid #5c0e0e;"></div>
<div style="left:113px;top:588.5px;width:4px;height:14px;background:#c8b43a;border:1px solid #8a7a20;"></div>
<div style="left:3px;top:606.3px;width:60.5px;height:28px;background:#ffffff;border:1px solid #8a8a8a;"></div>
<div style="left:4px;top:607.3px;width:58.5px;height:12.5px;background:#e9d3d3;"></div>
<span style="left:5.0px;top:622.4px;font-size:7.3px;line-height:8.76px;color:#777;letter-spacing:-0.07px;font-family:'Liberation Mono', monospace;">MAXScript Mi:</span>
<span style="left:69.0px;top:609.7px;font-size:7.8px;line-height:9.36px;color:#f0f0f0;letter-spacing:-0.72px;">1 Camera Selected</span>
<span style="left:68.0px;top:625.0px;font-size:7.8px;line-height:9.36px;color:#f0f0f0;letter-spacing:-0.53px;">Click and drag to select and move objects</span>
<svg style="left:628px;top:608px;" width="11" height="11" viewBox="0 0 11 11"><path d="M1 3.500V1H3.500M7.500 1H10V3.500M10 7.500V10H7.500M3.500 10H1V7.500" stroke="#ddd" fill="none" stroke-width="1"/><rect x="3.500" y="3.500" width="4" height="4" fill="#3fd0b8"/></svg>
<svg style="left:644.5px;top:607.5px;" width="9" height="12" viewBox="0 0 9 12"><rect x="0.800" y="5" width="7.400" height="6" fill="#f0f0f0"/><path d="M2.300 5V3.200a2.200 2.200 0 0 1 4.400 0V5" fill="none" stroke="#f0f0f0" stroke-width="1.2"/><circle cx="4.500" cy="8" r="1" fill="#444"/></svg>
<svg style="left:660.5px;top:608px;" width="11" height="11" viewBox="0 0 11 11"><rect x="0.500" y="0.500" width="10" height="10" fill="none" stroke="#eee" stroke-width="1"/><circle cx="5.500" cy="5.500" r="2.500" fill="#eee"/><path d="M5.500 1V10M1 5.500H10" stroke="#eee" stroke-width="0.800"/></svg>
<span style="left:676.0px;top:609.4px;font-size:7.4px;line-height:8.88px;color:#e8e8e8;font-weight:700;">X:</span>
<div style="left:685px;top:609px;width:40px;height:9.5px;background:#5e5e5e;"></div>
<span style="left:687.0px;top:609.5px;font-size:7.4px;line-height:8.88px;color:#eee;">387,729</span>
<svg style="left:720px;top:610.5px;" width="4" height="7" viewBox="0 0 4 7"><path d="M0 2.800L2 0.300L4 2.800ZM0 4.200L2 6.700L4 4.200Z" fill="#ddd"/></svg>
<span style="left:727.5px;top:609.4px;font-size:7.4px;line-height:8.88px;color:#e8e8e8;font-weight:700;">Y:</span>
<div style="left:735px;top:609px;width:41.5px;height:9.5px;background:#5e5e5e;"></div>
<span style="left:737.0px;top:609.5px;font-size:7.4px;line-height:8.88px;color:#eee;">-3628,456</span>
<svg style="left:771.5px;top:610.5px;" width="4" height="7" viewBox="0 0 4 7"><path d="M0 2.800L2 0.300L4 2.800ZM0 4.200L2 6.700L4 4.200Z" fill="#ddd"/></svg>
<span style="left:779.0px;top:609.4px;font-size:7.4px;line-height:8.88px;color:#e8e8e8;font-weight:700;">Z:</span>
<div style="left:787.5px;top:609px;width:41.5px;height:9.5px;background:#5e5e5e;"></div>
<span style="left:789.5px;top:609.5px;font-size:7.4px;line-height:8.88px;color:#eee;">52,311</span>
<svg style="left:824px;top:610.5px;" width="4" height="7" viewBox="0 0 4 7"><path d="M0 2.800L2 0.300L4 2.800ZM0 4.200L2 6.700L4 4.200Z" fill="#ddd"/></svg>
<span style="left:831.5px;top:609.3px;font-size:7.6px;line-height:9.12px;color:#eee;letter-spacing:-0.38px;">Grid = 100,0</span>
<svg style="left:816px;top:624px;" width="10" height="10" viewBox="0 0 10 10"><path d="M5 1L9 3V7L5 9L1 7V3ZM1 3L5 5L9 3M5 5V9" fill="none" stroke="#ddd" stroke-width="0.9"/></svg>
<div style="left:812px;top:622px;width:1px;height:12px;background:#5a5a5a;"></div>
<span style="left:831.5px;top:624.4px;font-size:7.6px;line-height:9.12px;color:#eee;letter-spacing:-0.52px;">Add Time Tag</span>
<svg style="left:899px;top:608px;" width="75" height="11" viewBox="0 0 75 11"><g fill="#eee" stroke="none">
<rect x="1.500" y="1.500" width="1.200" height="8"/><path d="M7.500 1.500V9.500L3.200 5.500ZM11.500 1.500V9.500L7.200 5.500Z"/>
<path d="M21 1.500V9.500L16.500 5.500Z"/><rect x="22" y="1.500" width="1.300" height="8"/><rect x="24.500" y="1.500" width="1.300" height="8"/>
<path d="M33 0.500V10.500L40 5.500Z"/>
<rect x="46" y="1.500" width="1.300" height="8"/><rect x="48.500" y="1.500" width="1.300" height="8"/><path d="M51 1.500V9.500L55.500 5.500Z"/>
<path d="M61 1.500V9.500L65.300 5.500ZM65 1.500V9.500L69.300 5.500Z"/><rect x="70" y="1.500" width="1.200" height="8"/></g></svg>
<svg style="left:900px;top:623.5px;" width="10" height="8" viewBox="0 0 10 8"><path d="M4 0.500V7.500L0.300 4ZM6 0.500V7.500L9.700 4Z" fill="#eee"/></svg>
<div style="left:915px;top:622.5px;width:42.5px;height:10.5px;background:#5e5e5e;"></div>
<span style="left:917.5px;top:623.6px;font-size:7.4px;line-height:8.88px;color:#eee;">1</span>
<svg style="left:951.5px;top:624.5px;" width="4" height="7" viewBox="0 0 4 7"><path d="M0 2.800L2 0.300L4 2.800ZM0 4.200L2 6.700L4 4.200Z" fill="#ddd"/></svg>
<svg style="left:960.5px;top:622.5px;" width="12" height="11" viewBox="0 0 12 11"><circle cx="5" cy="5" r="3.600" fill="none" stroke="#eee" stroke-width="1.2"/><path d="M5 3V5H6.500" stroke="#eee" fill="none" stroke-width="0.900"/><circle cx="8.500" cy="8" r="2.300" fill="#e8c030"/></svg>
<div style="left:980px;top:606px;width:25.5px;height:26.5px;background:#595959;border-radius:2px;"></div>
<svg style="left:983px;top:609px;" width="20" height="20" viewBox="0 0 20 20"><path d="M8.500 1.500V16M1.500 8.700H15.500" stroke="#fff" stroke-width="3.400"/><circle cx="14.500" cy="13" r="1.600" fill="none" stroke="#3fb8a0" stroke-width="1"/><path d="M13.200 14.500L10.500 17.500" stroke="#3fb8a0" stroke-width="1.200"/></svg>
<div style="left:1007.5px;top:609px;width:29px;height:10px;background:#5e5e5e;"></div>
<span style="left:1009.0px;top:609.6px;font-size:7.4px;line-height:8.88px;color:#eee;letter-spacing:-0.50px;">Auto Key</span>
<div style="left:1007.5px;top:622.5px;width:29px;height:10.5px;background:#5e5e5e;"></div>
<span style="left:1011.0px;top:623.6px;font-size:7.4px;line-height:8.88px;color:#eee;letter-spacing:-0.56px;">Set Key</span>
<div style="left:1040px;top:609px;width:70px;height:10px;background:#5e5e5e;"></div>
<span style="left:1043.0px;top:609.6px;font-size:7.4px;line-height:8.88px;color:#eee;letter-spacing:-0.47px;">Selected</span>
<svg style="left:1102px;top:612.5px;" width="5" height="4" viewBox="0 0 5 4"><path d="M0 0H5L2.5 3.5Z" fill="#eee"/></svg>
<svg style="left:1039.5px;top:622.5px;" width="13" height="11" viewBox="0 0 13 11"><path d="M2 9.500Q2 3 6.500 3Q11 3 11 9.500" fill="none" stroke="#3fb8a0" stroke-width="1.200"/><circle cx="3" cy="2.500" r="1.300" fill="#eee"/><circle cx="10" cy="2.500" r="1.300" fill="#eee"/><circle cx="6.500" cy="3" r="1.200" fill="#eee"/></svg>
<div style="left:1056px;top:622.5px;width:54px;height:10.5px;background:#5e5e5e;"></div>
<span style="left:1064.0px;top:623.6px;font-size:7.4px;line-height:8.88px;color:#eee;letter-spacing:-0.22px;">Key Filters...</span>
<svg style="left:1116.5px;top:607.5px;" width="12" height="12" viewBox="0 0 12 12"><circle cx="6.500" cy="4.500" r="3" fill="none" stroke="#eee" stroke-width="1.300"/><path d="M4.500 7L1.500 10.500" stroke="#eee" stroke-width="1.500"/></svg>
<svg style="left:1130px;top:607.5px;" width="12" height="12" viewBox="0 0 12 12"><circle cx="7" cy="4" r="2.500" fill="none" stroke="#3fb8a0" stroke-width="1.200"/><path d="M5 6L2 10" stroke="#3fb8a0" stroke-width="1.300"/><rect x="8" y="1" width="3" height="3" fill="#eee"/></svg>
<svg style="left:1144px;top:607.5px;" width="12" height="12" viewBox="0 0 12 12"><path d="M1 3.500V1H3.500M8.500 1H11V3.500M11 8.500V11H8.500M3.500 11H1V8.500" stroke="#3fb8a0" fill="none" stroke-width="1"/><circle cx="6" cy="6" r="3" fill="#5a8ac8"/></svg>
<svg style="left:1158px;top:607.5px;" width="12" height="12" viewBox="0 0 12 12"><path d="M1 3.500V1H3.500M8.500 1H11V3.500M11 8.500V11H8.500M3.500 11H1V8.500" stroke="#3fb8a0" fill="none" stroke-width="1"/><rect x="3" y="4" width="3.500" height="3.500" fill="#eee"/><rect x="6" y="6" width="3" height="3" fill="#3fb8a0"/></svg>
<svg style="left:1116.5px;top:622px;" width="12" height="12" viewBox="0 0 12 12"><path d="M1.500 1.500L9.500 5L1.500 10" fill="none" stroke="#eee" stroke-width="1.300"/><path d="M9 8V11H12Z" fill="#eee"/></svg>
<svg style="left:1130px;top:622px;" width="12" height="12" viewBox="0 0 12 12"><circle cx="6" cy="2" r="1.400" fill="#eee"/><path d="M6 3.500V7.500M3.500 5H8.500M6 7.500L4 11M6 7.500L8 11" stroke="#eee" stroke-width="1.100" fill="none"/></svg>
<svg style="left:1144px;top:622px;" width="12" height="12" viewBox="0 0 12 12"><ellipse cx="6" cy="6" rx="5" ry="2.300" fill="none" stroke="#3fb8a0" stroke-width="1" transform="rotate(-30 6 6)"/><circle cx="6" cy="6" r="2.200" fill="#ddd"/></svg>
<svg style="left:1158px;top:622px;" width="12" height="12" viewBox="0 0 12 12"><rect x="1" y="1" width="10" height="10" fill="none" stroke="#eee" stroke-width="1.100"/><rect x="1" y="5.500" width="5.500" height="5.500" fill="#eee"/><path d="M7 5L10 2M10 2H7.800M10 2V4.200" stroke="#eee" stroke-width="0.900" fill="none"/></svg>
<div style="left:0px;top:636.5px;width:1180px;height:25.5px;background:radial-gradient(ellipse 60px 14px at 640px 12px,rgba(140,76,58,.42),transparent),radial-gradient(ellipse 50px 12px at 560px 10px,rgba(120,74,56,.34),transparent),radial-gradient(ellipse 80px 14px at 760px 14px,rgba(100,46,38,.4),transparent),linear-gradient(90deg,#2e1f1d 0,#362320 10%,#38241f 30%,#40261e 45%,#4a2a24 55%,#402420 66%,#35201d 80%,#2b1b1b 92%,#271818 100%);border-top:1px solid #6e5a54;"></div>
<div style="left:0px;top:637.5px;width:1180px;height:1px;background:rgba(255,255,255,0.13);"></div>
<svg style="left:7.2px;top:29.3px" width="16.2" height="16.2" viewBox="-9 -9 18 18"><path d="M-5.500,-3H2.500A3.500,3.500 0 0 1 2.500,4H-2" fill="none" stroke="#f2f2f2" stroke-width="2.300"/><path d="M-7.500,-3L-3.500,-6.200V0.200Z" fill="#f2f2f2"/></svg>
<svg style="left:26.2px;top:29.3px" width="16.2" height="16.2" viewBox="-9 -9 18 18"><path d="M5.500,-3H-2.500A3.500,3.500 0 0 0 -2.500,4H2" fill="none" stroke="#f2f2f2" stroke-width="2.300"/><path d="M7.500,-3L3.500,-6.200V0.200Z" fill="#f2f2f2"/></svg>
<div style="left:46.5px;top:30px;width:1px;height:15px;background:#2e2e2e;"></div>
<svg style="left:49.9px;top:29.3px" width="16.2" height="16.2" viewBox="-9 -9 18 18"><g transform="rotate(-40)" fill="none" stroke="#f2f2f2" stroke-width="1.700"><rect x="-7" y="-2.300" width="7.500" height="4.600" rx="2.300"/><rect x="-0.500" y="-2.300" width="7.500" height="4.600" rx="2.300"/></g></svg>
<svg style="left:69.4px;top:29.3px" width="16.2" height="16.2" viewBox="-9 -9 18 18"><g transform="rotate(-40)" fill="none" stroke="#f2f2f2" stroke-width="1.700"><rect x="-7.500" y="-2.300" width="6.500" height="4.600" rx="2.300"/><rect x="1" y="-2.300" width="6.500" height="4.600" rx="2.300"/></g><path d="M-1,-5L1,5" stroke="#444" stroke-width="1.600"/></svg>
<svg style="left:89.9px;top:29.3px" width="16.2" height="16.2" viewBox="-9 -9 18 18"><path d="M-6,0q3-2 6,0t6,0M-6,2.800q3-2 6,0t6,0M-6,5.600q3-2 6,0t6,0" fill="none" stroke="#f2f2f2" stroke-width="1.100"/><g transform="rotate(-40 2 -3)" fill="none" stroke="#e8a020" stroke-width="1.500"><rect x="-3" y="-5" width="6" height="3.600" rx="1.800"/><rect x="2" y="-5" width="6" height="3.600" rx="1.800"/></g></svg>
<div style="left:107.5px;top:30px;width:1px;height:15px;background:#2e2e2e;"></div>
<div style="left:112px;top:31.5px;width:40.5px;height:10.5px;background:#5c5c5c;"></div>
<span style="left:115.0px;top:32.3px;font-size:7.6px;line-height:9.12px;color:#bbb;">All</span>
<svg style="left:145px;top:35.5px;" width="5" height="4" viewBox="0 0 5 4"><path d="M0 0H5L2.500 3.500Z" fill="#eee"/></svg>
<svg style="left:154.6px;top:29.3px" width="16.2" height="16.2" viewBox="-9 -9 18 18"><rect x="-6" y="-6.500" width="9.500" height="9.500" fill="#d8d8d8"/><path d="M2,0.500L7,5L4.600,5.200L5.800,7.800L4.500,8.300L3.300,5.800L2,7.200Z" fill="#f0a818"/></svg>
<svg style="left:174.9px;top:29.3px" width="16.2" height="16.2" viewBox="-9 -9 18 18"><path d="M-7,-5.500H4M-7,-2.500H6M-7,0.500H3M-7,3.500H1" stroke="#f2f2f2" stroke-width="1.500"/><path d="M2.500,0.500L7.500,5L5.100,5.200L6.300,7.800L5,8.300L3.800,5.800L2.500,7.200Z" fill="#f0a818"/></svg>
<svg style="left:194.9px;top:29.3px" width="16.2" height="16.2" viewBox="-9 -9 18 18"><rect x="-6.500" y="-6" width="13" height="12" fill="none" stroke="#3fbfa6" stroke-width="1.500" stroke-dasharray="2.600 1.600"/></svg>
<svg style="left:208px;top:43.4px" width="3" height="3"><path d="M3 0V3H0Z" fill="#ddd"/></svg>
<svg style="left:214.4px;top:29.3px" width="16.2" height="16.2" viewBox="-9 -9 18 18"><rect x="-7" y="-6" width="9.500" height="12" fill="none" stroke="#f2f2f2" stroke-width="1.400" stroke-dasharray="2.600 1.600"/><rect x="0.500" y="-3" width="6" height="6" fill="#2fb0c8"/></svg>
<div style="left:231.5px;top:30px;width:1px;height:15px;background:#2e2e2e;"></div>
<div style="left:237px;top:28.8px;width:18.5px;height:17.8px;background:#4f86cf;border:1px solid #6aa0e8;"></div>
<svg style="left:238.1px;top:29.3px" width="16.2" height="16.2" viewBox="-9 -9 18 18"><path d="M0,-7L2.800,-3.800H1.100V-1.100H3.800V-2.800L7,0L3.800,2.800V1.100H1.100V3.800H2.800L0,7L-2.800,3.800H-1.100V1.100H-3.800V2.800L-7,0L-3.800,-2.800V-1.100H-1.100V-3.800H-2.800Z" fill="#fff"/></svg>
<svg style="left:257.4px;top:29.3px" width="16.2" height="16.2" viewBox="-9 -9 18 18"><path d="M4.300,-3.200A5.300,5.300 0 1 0 5.300,1.200" fill="none" stroke="#f2f2f2" stroke-width="1.800"/><path d="M1,-6.800L6.300,-6.300L5.300,-1Z" fill="#f2f2f2"/></svg>
<svg style="left:276.7px;top:29.3px" width="16.2" height="16.2" viewBox="-9 -9 18 18"><rect x="-6.500" y="-6.500" width="13" height="13" fill="none" stroke="#3fbfa6" stroke-width="1.500" stroke-dasharray="2.600 1.600"/><rect x="-5.500" y="-0.500" width="6" height="6" fill="#e4e4e4"/><path d="M-1.500,-3.500H3.500V1.500" fill="none" stroke="#3fbfa6" stroke-width="1.300"/></svg>
<svg style="left:289.8px;top:43.4px" width="3" height="3"><path d="M3 0V3H0Z" fill="#ddd"/></svg>
<svg style="left:295.9px;top:29.3px" width="16.2" height="16.2" viewBox="-9 -9 18 18"><circle cx="-1" cy="1" r="6" fill="#e0e0e0"/><circle cx="-1" cy="1" r="2" fill="#444"/><path d="M-1,1L4,-4" stroke="#e8a020" stroke-width="1.600"/><circle cx="4.500" cy="-4.500" r="2.800" fill="#2fb0c8"/></svg>
<svg style="left:309px;top:43.4px" width="3" height="3"><path d="M3 0V3H0Z" fill="#ddd"/></svg>
<div style="left:315px;top:30.5px;width:42px;height:11.2px;background:#5c5c5c;"></div>
<span style="left:318.0px;top:31.9px;font-size:7.6px;line-height:9.12px;color:#bbb;">View</span>
<svg style="left:349.5px;top:34.5px;" width="5" height="4" viewBox="0 0 5 4"><path d="M0 0H5L2.500 3.500Z" fill="#eee"/></svg>
<svg style="left:358.9px;top:29.3px" width="16.2" height="16.2" viewBox="-9 -9 18 18"><path d="M-6.500,-6.500H-1.500V2.500L-4,0.500L-6.500,2.500Z" fill="#e8e8e8"/><path d="M1.500,-6.500H6.500V2.500L4,0.500L1.500,2.500Z" fill="#e8e8e8"/><path d="M-4,7.500V2.500M-6,5L-4,7.500L-2,5" stroke="#3fbfa6" stroke-width="1.400" fill="none"/><path d="M4,-5V0M2,-2.500L4,-5L6,-2.500" stroke="#3fbfa6" stroke-width="1.400" fill="none"/></svg>
<svg style="left:373px;top:43.4px" width="3" height="3"><path d="M3 0V3H0Z" fill="#ddd"/></svg>
<div style="left:379px;top:30px;width:1px;height:15px;background:#2e2e2e;"></div>
<svg style="left:382.6px;top:29.3px" width="16.2" height="16.2" viewBox="-9 -9 18 18"><path d="M0,-6.500V6.500M-6.500,0H6.500" stroke="#f2f2f2" stroke-width="1.500"/><circle cx="0" cy="-6.500" r="1.400" fill="#3fbfa6"/></svg>
<svg style="left:401.9px;top:29.3px" width="16.2" height="16.2" viewBox="-9 -9 18 18"><rect x="-6.500" y="-6.500" width="13" height="13" rx="1" fill="#e4e4e4"/><path d="M0,-4L3.200,-0.500H1.200V2.500H-1.200V-0.500H-3.200Z" fill="#333"/></svg>
<div style="left:422px;top:30px;width:1px;height:15px;background:#2e2e2e;"></div>
<svg style="left:423.9px;top:29.3px" width="16.2" height="16.2" viewBox="-9 -9 18 18"><text x="-7.500" y="5.500" font-size="14" font-weight="700" fill="#f2f2f2" font-family="Liberation Sans, sans-serif">3</text><path d="M1,-3.500Q5.5,-8.500 6,-4.500Q6,-2 3.5,-1" fill="none" stroke="#e8a020" stroke-width="1.300"/></svg>
<svg style="left:437px;top:43.4px" width="3" height="3"><path d="M3 0V3H0Z" fill="#ddd"/></svg>
<svg style="left:444.6px;top:29.3px" width="16.2" height="16.2" viewBox="-9 -9 18 18"><path d="M-6,-5.500V5.500H5.500" fill="none" stroke="#f2f2f2" stroke-width="1.600"/><path d="M-6,0A5.500,5.500 0 0 1 -0.500,5.500" fill="none" stroke="#f2f2f2" stroke-width="1.300"/><path d="M1,-3.500Q5.5,-8.500 6,-4.500Q6,-2 3.5,-1" fill="none" stroke="#e8a020" stroke-width="1.300"/></svg>
<svg style="left:464.3px;top:29.3px" width="16.2" height="16.2" viewBox="-9 -9 18 18"><path d="M-5.500,6L3,-6" stroke="#f2f2f2" stroke-width="1.600"/><circle cx="-4.500" cy="-3.500" r="2.300" fill="none" stroke="#f2f2f2" stroke-width="1.400"/><circle cx="3.500" cy="3.500" r="2.300" fill="none" stroke="#f2f2f2" stroke-width="1.400"/><path d="M2,-3.500Q6.5,-8.500 7,-4.500Q7,-2 4.5,-1" fill="none" stroke="#e8a020" stroke-width="1.300"/></svg>
<svg style="left:483.7px;top:29.3px" width="16.2" height="16.2" viewBox="-9 -9 18 18"><path d="M-6.500,-1L-3,-6L0.500,-1ZM-6.500,1.500L-3,6.500L0.500,1.500Z" fill="#f2f2f2"/><path d="M1.5,-3.500Q6.0,-8.500 6.5,-4.500Q6.5,-2 4.0,-1" fill="none" stroke="#e8a020" stroke-width="1.300"/></svg>
<div style="left:503px;top:30px;width:1px;height:15px;background:#2e2e2e;"></div>
<svg style="left:507.5px;top:29.3px" width="16.2" height="16.2" viewBox="-9 -9 18 18"><text x="-8" y="5" font-size="14" fill="#f2f2f2" font-family="Liberation Sans, sans-serif">{</text><text x="1.500" y="5" font-size="14" fill="#f2f2f2" font-family="Liberation Sans, sans-serif">}</text><path d="M-2.500,3L2.500,-5" stroke="#e8c020" stroke-width="1.500"/></svg>
<div style="left:526.5px;top:30.5px;width:71.5px;height:11.2px;background:#5c5c5c;"></div>
<span style="left:529.0px;top:31.9px;font-size:7.6px;line-height:9.12px;color:#bbb;letter-spacing:-0.40px;">Create Selection Se</span>
<svg style="left:591px;top:34.5px;" width="5" height="4" viewBox="0 0 5 4"><path d="M0 0H5L2.500 3.500Z" fill="#eee"/></svg>
<div style="left:604px;top:30px;width:1px;height:15px;background:#2e2e2e;"></div>
<svg style="left:604.5px;top:29.3px" width="16.2" height="16.2" viewBox="-9 -9 18 18"><path d="M-6.500,-5L-1.800,-3V4.500L-6.500,6.500Z" fill="#f2f2f2"/><path d="M6.500,-5L1.800,-3V4.500L6.500,6.500Z" fill="#3fbfa6"/><path d="M0,-7V7" stroke="#f2f2f2" stroke-width="1" stroke-dasharray="2 1.300"/></svg>
<svg style="left:623.9px;top:29.3px" width="16.2" height="16.2" viewBox="-9 -9 18 18"><path d="M-6.500,-7V7" stroke="#f2f2f2" stroke-width="1.200" stroke-dasharray="2 1.300"/><rect x="-4" y="-6" width="8" height="4.500" fill="#f2f2f2"/><rect x="-4" y="1" width="10" height="4.500" fill="#d0d0d0"/><path d="M3,-3L6,-0.500L3,2" fill="none" stroke="#3fbfa6" stroke-width="1.300"/></svg>
<svg style="left:637px;top:43.4px" width="3" height="3"><path d="M3 0V3H0Z" fill="#ddd"/></svg>
<div style="left:643px;top:30px;width:1px;height:15px;background:#2e2e2e;"></div>
<svg style="left:647.7px;top:29.3px" width="16.2" height="16.2" viewBox="-9 -9 18 18"><rect x="-6.500" y="-7" width="13" height="14" fill="none" stroke="#f2f2f2" stroke-width="1.400"/><path d="M-4,-3.500H4M-4,0H4M-4,3.500H4" stroke="#f2f2f2" stroke-width="1.500"/></svg>
<svg style="left:666.7px;top:29.3px" width="16.2" height="16.2" viewBox="-9 -9 18 18"><rect x="-6.500" y="-7" width="13" height="14" fill="none" stroke="#f2f2f2" stroke-width="1.400"/><path d="M0,-5L4,-3L0,-1L-4,-3ZM-4,-0.500L0,1.500L4,-0.500M-4,2L0,4L4,2" fill="none" stroke="#f2f2f2" stroke-width="1.300"/></svg>
<div style="left:686px;top:30px;width:1px;height:15px;background:#2e2e2e;"></div>
<div style="left:690.5px;top:29px;width:17.5px;height:17.5px;background:#4a5f80;border:1px solid #6aa0e8;border-radius:1px;"></div>
<svg style="left:691.2px;top:29.3px" width="16.2" height="16.2" viewBox="-9 -9 18 18"><rect x="-6" y="-6.500" width="12" height="13" fill="#e8e8e8"/><rect x="-6" y="-6.500" width="12" height="2.500" fill="#888"/><path d="M-4.500,-1.500H-1M1,-1.500H4.500M-4.500,2.500H-1M1,2.500H4.500" stroke="#333" stroke-width="2"/></svg>
<svg style="left:709.9px;top:29.3px" width="16.2" height="16.2" viewBox="-9 -9 18 18"><rect x="-6.500" y="-6.500" width="13" height="13" fill="#e0e0e0"/><rect x="-6.500" y="-6.500" width="13" height="2.500" fill="#777"/><path d="M-4.500,2q2.200-4.500 4.500,0t4.500,0" fill="none" stroke="#3fbfa6" stroke-width="1.700"/></svg>
<svg style="left:729.7px;top:29.3px" width="16.2" height="16.2" viewBox="-9 -9 18 18"><path d="M-6.500,-6H6.500" stroke="#f2f2f2" stroke-width="1.600"/><path d="M0,-4V2M-2.800,-0.500L0,2.300L2.800,-0.500" stroke="#3fbfa6" stroke-width="1.600" fill="none"/><path d="M-6.500,5H6.500" stroke="#3fbfa6" stroke-width="2.200"/></svg>
<div style="left:748.5px;top:30px;width:1px;height:15px;background:#2e2e2e;"></div>
<svg style="left:752.9px;top:29.3px" width="16.2" height="16.2" viewBox="-9 -9 18 18"><rect x="-6.500" y="-6.500" width="13" height="13" fill="none" stroke="#f2f2f2" stroke-width="1.300"/><rect x="-6.500" y="-6.500" width="13" height="2.600" fill="#ccc"/><circle cx="-2" cy="1.500" r="2.600" fill="none" stroke="#f2f2f2" stroke-width="1.300"/><path d="M2.500,0H5M2.500,2.500H5" stroke="#f2f2f2" stroke-width="1.200"/></svg>
<svg style="left:766px;top:43.4px" width="3" height="3"><path d="M3 0V3H0Z" fill="#ddd"/></svg>
<div style="left:775px;top:28.8px;width:18.5px;height:17.8px;background:#4f86cf;border:1px solid #6aa0e8;"></div>
<svg style="left:775.9px;top:29.3px" width="16.2" height="16.2" viewBox="-9 -9 18 18"><path d="M-4.6,-1.2Q-5.6,1.6 -4.2,3.6Q-3.2,5 0,5Q3.200,5 4.200,3.600Q5.600,1.600 4.600,-1.200ZM-3.400,-1.700Q0,-3.600 3.400,-1.700ZM-0.900,-3.300A0.900,0.900 0 1 1 0.900,-3.300ZM-4.800,0.200L-8,-2.200L-7.200,-2.800L-4.300,-1Z" fill="#f4f4f4" stroke="#f4f4f4" stroke-width="0.500"/><path d="M4.700,-0.600Q8,-1.200 7.600,1.400Q7.200,3.200 4.600,3.200" fill="none" stroke="#f4f4f4" stroke-width="1.100"/><circle cx="4" cy="4" r="3" fill="none" stroke="#e8a020" stroke-width="1.400"/><circle cx="4" cy="4" r="1" fill="#e8a020"/></svg>
<svg style="left:796.9px;top:29.3px" width="16.2" height="16.2" viewBox="-9 -9 18 18"><rect x="-7" y="-6.500" width="14" height="13" fill="#3fbfa6"/><rect x="-7" y="-6.500" width="14" height="2.500" fill="#ddd"/><path transform="translate(0,1) scale(0.85)" d="M-4.6,-1.2Q-5.6,1.6 -4.2,3.6Q-3.2,5 0,5Q3.200,5 4.200,3.600Q5.600,1.600 4.600,-1.200ZM-3.400,-1.700Q0,-3.600 3.400,-1.700ZM-0.900,-3.300A0.900,0.900 0 1 1 0.900,-3.300ZM-4.800,0.200L-8,-2.200L-7.200,-2.800L-4.300,-1Z" fill="#f4f4f4" stroke="#f4f4f4" stroke-width="0.500"/><path transform="translate(0,1) scale(0.85)" d="M4.700,-0.600Q8,-1.200 7.600,1.400Q7.200,3.200 4.600,3.200" fill="none" stroke="#f4f4f4" stroke-width="1.100"/></svg>
<svg style="left:815.4px;top:29.3px" width="16.2" height="16.2" viewBox="-9 -9 18 18"><path d="M-4.6,-1.2Q-5.6,1.6 -4.2,3.6Q-3.2,5 0,5Q3.200,5 4.200,3.600Q5.600,1.600 4.600,-1.200ZM-3.400,-1.700Q0,-3.600 3.400,-1.700ZM-0.900,-3.300A0.900,0.900 0 1 1 0.900,-3.300ZM-4.800,0.200L-8,-2.200L-7.200,-2.800L-4.300,-1Z" fill="#f4f4f4" stroke="#f4f4f4" stroke-width="0.500"/><path d="M4.700,-0.600Q8,-1.200 7.600,1.400Q7.200,3.200 4.600,3.200" fill="none" stroke="#f4f4f4" stroke-width="1.100"/><path d="M5,1L3,5H5.500L4,8.500" stroke="#3fbfa6" stroke-width="1.300" fill="none"/></svg>
<svg style="left:829px;top:43.4px" width="3" height="3"><path d="M3 0V3H0Z" fill="#ddd"/></svg>
<svg style="left:835.4px;top:29.3px" width="16.2" height="16.2" viewBox="-9 -9 18 18"><path d="M-4.6,-1.2Q-5.6,1.6 -4.2,3.6Q-3.2,5 0,5Q3.200,5 4.200,3.600Q5.600,1.600 4.600,-1.200ZM-3.400,-1.700Q0,-3.600 3.400,-1.700ZM-0.900,-3.300A0.900,0.900 0 1 1 0.900,-3.300ZM-4.800,0.200L-8,-2.200L-7.200,-2.800L-4.300,-1Z" fill="#f4f4f4" stroke="#f4f4f4" stroke-width="0.500"/><path d="M4.700,-0.600Q8,-1.200 7.600,1.400Q7.200,3.200 4.600,3.200" fill="none" stroke="#f4f4f4" stroke-width="1.100"/><path d="M-4,6.500Q0,3 4,6.500Z" fill="#3fbfa6"/><path d="M-5,6.500H6" stroke="#3fbfa6" stroke-width="1.500"/></svg>
<svg style="left:854.9px;top:29.3px" width="16.2" height="16.2" viewBox="-9 -9 18 18"><rect x="-6.5" y="-6.5" width="5.500" height="5.500" fill="#e8e8e8"/><path d="M-5.0,-2.5L-2.5,-5.0" stroke="#333" stroke-width="1"/><rect x="-6.5" y="0.8" width="5.500" height="5.500" fill="#e8e8e8"/><path d="M-5.0,4.8L-2.5,2.3" stroke="#333" stroke-width="1"/><rect x="0.8" y="-6.5" width="5.500" height="5.500" fill="#e8e8e8"/><path d="M2.3,-2.5L4.8,-5.0" stroke="#333" stroke-width="1"/><rect x="0.8" y="0.8" width="5.500" height="5.500" fill="#e8e8e8"/><path d="M2.3,4.8L4.8,2.3" stroke="#333" stroke-width="1"/></svg>
<svg style="left:6.9px;top:49.7px" width="16.2" height="16.2" viewBox="-9 -9 18 18"><path transform="scale(1.15)" d="M-4.6,-1.2Q-5.6,1.6 -4.2,3.6Q-3.2,5 0,5Q3.200,5 4.200,3.600Q5.600,1.600 4.600,-1.200ZM-3.400,-1.700Q0,-3.600 3.400,-1.700ZM-0.900,-3.300A0.900,0.900 0 1 1 0.900,-3.300ZM-4.800,0.200L-8,-2.200L-7.200,-2.800L-4.300,-1Z" fill="#f4f4f4" stroke="#f4f4f4" stroke-width="0.500"/><path transform="scale(1.15)" d="M4.700,-0.600Q8,-1.200 7.600,1.400Q7.200,3.200 4.600,3.200" fill="none" stroke="#f4f4f4" stroke-width="1.100"/></svg>
<svg style="left:18px;top:63.8px" width="3" height="3"><path d="M3 0V3H0Z" fill="#ddd"/></svg>
<svg style="left:25.9px;top:49.7px" width="16.2" height="16.2" viewBox="-9 -9 18 18"><rect x="-7.500" y="-7" width="15" height="14" fill="#c8ccd4"/><rect x="-7.500" y="-7" width="15" height="2.500" fill="#7890b8"/><rect x="-5.500" y="-3" width="11" height="8.500" fill="#dfe4ec"/><circle cx="-1" cy="1.500" r="2.600" fill="#c82828"/></svg>
<svg style="left:46.6px;top:49.7px" width="16.2" height="16.2" viewBox="-9 -9 18 18"><rect x="-6" y="-7" width="12" height="14" fill="#b8bcc4"/><path d="M-4.500,-4.500H4.500M-4.500,-1.500H4.500M-4.500,1.500H4.500M-4.500,4.500H4.500" stroke="#5a5e68" stroke-width="1.600"/></svg>
<svg style="left:65.6px;top:49.7px" width="16.2" height="16.2" viewBox="-9 -9 18 18"><rect x="-7.500" y="-7" width="15" height="14" fill="#c8ccd4"/><rect x="-7.500" y="-7" width="15" height="3" fill="#7088b0"/><path d="M-5.500,-1.500H5.500M-5.500,1.500H5.500M-5.500,4.500H5.500M-2,-3V6M2,-3V6" stroke="#60646e" stroke-width="1.100"/></svg>
<div style="left:86px;top:50px;width:1px;height:15px;background:#2e2e2e;"></div>
<svg style="left:89.9px;top:49.7px" width="16.2" height="16.2" viewBox="-9 -9 18 18"><circle cx="-2" cy="-2.500" r="4.500" fill="#e8f060"/><rect x="-3.300" y="1.500" width="2.600" height="3.500" fill="#ccc"/><rect x="-0.500" y="0.500" width="8.500" height="5" fill="#8a9ac0"/><path d="M0.500,2H7M0.500,4H7" stroke="#dfe4f0" stroke-width="0.900"/></svg>
<div style="left:111px;top:50px;width:1px;height:15px;background:#2e2e2e;"></div>
<svg style="left:114.9px;top:49.7px" width="16.2" height="16.2" viewBox="-9 -9 18 18"><rect x="-5" y="-2.500" width="7" height="5" fill="#d8d8d8"/><path d="M2,0L6.500,-3.500V3.500Z" fill="#b8b8b8"/><circle cx="-3.500" cy="-4" r="1.600" fill="#d8d8d8"/><circle cx="0" cy="-4" r="1.600" fill="#d8d8d8"/><path d="M-1.500,2.500V6.500M-4,6.500H1" stroke="#ccc" stroke-width="1"/></svg>
<svg style="left:134.3px;top:49.7px" width="16.2" height="16.2" viewBox="-9 -9 18 18"><path d="M-1,-7A7,7 0 0 1 -1,7Z" fill="#e4e4e4"/><path d="M-1,-7A7,7 0 0 0 -1,7" fill="none" stroke="#ddd" stroke-width="1.200"/><circle cx="-4" cy="0" r="1.400" fill="#eee"/></svg>
<svg style="left:154.6px;top:49.7px" width="16.2" height="16.2" viewBox="-9 -9 18 18"><circle cx="-3.500" cy="-3" r="3.300" fill="#c01818"/><circle cx="3.500" cy="-3" r="3.300" fill="#c01818"/><circle cx="-3.500" cy="-3" r="1.400" fill="#e8e8e8"/><circle cx="3.500" cy="-3" r="1.400" fill="#e8e8e8"/><rect x="-6" y="1" width="9.500" height="5.500" fill="#e0e0e0"/><path d="M3.500,3.700L7.500,1V6.500Z" fill="#e0e0e0"/><path d="M-5,3.700H2.500" stroke="#c01818" stroke-width="1.200"/></svg>
<div style="left:175px;top:50px;width:1px;height:15px;background:#2e2e2e;"></div>
<svg style="left:178.9px;top:49.7px" width="16.2" height="16.2" viewBox="-9 -9 18 18"><rect x="-7" y="-5.500" width="14" height="11" rx="1" fill="#a8a880"/><rect x="-5" y="-3.500" width="10" height="7" fill="#f0f0b0"/></svg>
<svg style="left:198.4px;top:49.7px" width="16.2" height="16.2" viewBox="-9 -9 18 18"><path d="M-7.500,4.500A7.500,8.500 0 0 1 7.500,4.500Z" fill="#dfe4a0"/><path d="M-7.500,4.500H7.500" stroke="#a8a878" stroke-width="1.600"/></svg>
<svg style="left:217.7px;top:49.7px" width="16.2" height="16.2" viewBox="-9 -9 18 18"><circle r="7" fill="#b8b8a0"/><circle r="4.800" fill="#f4f4c8"/></svg>
<svg style="left:237.3px;top:49.7px" width="16.2" height="16.2" viewBox="-9 -9 18 18"><path d="M-4.6,-1.2Q-5.6,1.6 -4.2,3.6Q-3.2,5 0,5Q3.200,5 4.200,3.600Q5.600,1.600 4.600,-1.200ZM-3.400,-1.700Q0,-3.600 3.400,-1.700ZM-0.900,-3.300A0.900,0.900 0 1 1 0.900,-3.300ZM-4.800,0.200L-8,-2.200L-7.200,-2.800L-4.300,-1Z" fill="none" stroke="#ccc" stroke-width="0.900"/><path d="M4.700,-0.600Q8,-1.200 7.600,1.400Q7.200,3.200 4.600,3.200" fill="none" stroke="#ccc" stroke-width="1.100"/></svg>
<svg style="left:257.6px;top:49.7px" width="16.2" height="16.2" viewBox="-9 -9 18 18"><path d="M0,-7.500L7,6.500H-7Z" fill="#b0b0b0"/><path d="M0,-7.500L2,6.500H-3Z" fill="#e4e4e4"/></svg>
<svg style="left:276.7px;top:49.7px" width="16.2" height="16.2" viewBox="-9 -9 18 18"><g stroke="#f0b818" stroke-width="1.600"><path d="M0,-8V8M-8,0H8M-5.700,-5.700L5.700,5.700M5.700,-5.700L-5.700,5.700"/></g><circle r="4.600" fill="#f8d820"/></svg>
<svg style="left:295.9px;top:49.7px" width="16.2" height="16.2" viewBox="-9 -9 18 18"><circle r="6.800" fill="#c8c880"/><circle r="5" fill="#a8a858"/></svg>
<div style="left:316.5px;top:50px;width:1px;height:15px;background:#2e2e2e;"></div>
<svg style="left:320.7px;top:49.7px" width="16.2" height="16.2" viewBox="-9 -9 18 18"><circle cx="-6" cy="-3.5" r="1" fill="#eee"/><circle cx="-4.5" cy="-0.5" r="1" fill="#eee"/><circle cx="-3" cy="2.5" r="1" fill="#eee"/><circle cx="-2.8" cy="-4.3" r="1" fill="#eee"/><circle cx="-1.3" cy="-1.3" r="1" fill="#eee"/><circle cx="0.2" cy="1.7" r="1" fill="#eee"/><circle cx="0.4" cy="-5.1" r="1" fill="#eee"/><circle cx="1.9" cy="-2.1" r="1" fill="#eee"/><circle cx="3.4" cy="0.9" r="1" fill="#eee"/><circle cx="3.6" cy="-5.9" r="1" fill="#eee"/><circle cx="5.1" cy="-2.9" r="1" fill="#eee"/><circle cx="6.6" cy="0.1" r="1" fill="#eee"/></svg>
<svg style="left:339.9px;top:49.7px" width="16.2" height="16.2" viewBox="-9 -9 18 18"><path d="M-3.500,3L4,-3.500" stroke="#ccc" stroke-width="1.500"/><circle cx="4" cy="-3.500" r="3.300" fill="#d03030"/><circle cx="-4" cy="3.500" r="3.300" fill="#4878c0"/></svg>
<svg style="left:360.5px;top:49.7px" width="16.2" height="16.2" viewBox="-9 -9 18 18"><path d="M-6.500,6.500V0L0,-4.500L6.500,0V6.500ZM-6.500,0L6.500,6.500M6.500,0L-6.500,6.500M0,-4.500V-8M-2,-6H2" fill="none" stroke="#b8d0e8" stroke-width="1"/></svg>
<svg style="left:380.9px;top:49.7px" width="16.2" height="16.2" viewBox="-9 -9 18 18"><circle r="6.500" fill="#5a86c8"/><path d="M-5,-3L5,3M-5,3L5,-3M0,-6V6" stroke="#a8c8f0" stroke-width="1"/><circle r="2" fill="#c8e0ff"/></svg>
<svg style="left:399.4px;top:49.7px" width="16.2" height="16.2" viewBox="-9 -9 18 18"><path d="M0,7Q-7,0 -6,-5Q-3,-2 -2,3Q-2.500,-4 0,-7.500Q2.500,-4 2,3Q3,-2 6,-5Q7,0 0,7Z" fill="#5aa83a"/></svg>
<svg style="left:418.9px;top:49.7px" width="16.2" height="16.2" viewBox="-9 -9 18 18"><path d="M-7,-5Q0,-7 6,-2Q8,2 4,6Q5,1 1,-1Q-3,-2.500 -7,-2Z" fill="#c8a878"/><text x="-7.500" y="6.500" font-size="6" font-weight="700" fill="#fff" font-family="Liberation Sans, sans-serif">HF</text></svg>
<svg style="left:438.9px;top:49.7px" width="16.2" height="16.2" viewBox="-9 -9 18 18"><circle cx="1" r="6.500" fill="#a89878"/><circle cx="-1" cy="-1.500" r="3" fill="#c8b898"/><text x="-8" y="6" font-size="6" font-weight="700" fill="#fff" font-family="Liberation Sans, sans-serif">0.5</text></svg>
<div style="left:459px;top:50px;width:1px;height:15px;background:#2e2e2e;"></div>
<svg style="left:463.3px;top:49.7px" width="16.2" height="16.2" viewBox="-9 -9 18 18"><circle r="7" fill="#6a9ad0"/><circle cx="-2" cy="-2.500" r="3.500" fill="#b8d4f0"/></svg>
<svg style="left:477px;top:63.8px" width="3" height="3"><path d="M3 0V3H0Z" fill="#ddd"/></svg>
<svg style="left:482.9px;top:49.7px" width="16.2" height="16.2" viewBox="-9 -9 18 18"><rect x="-6.500" y="-7" width="9" height="11" fill="#d8dce4"/><rect x="-4.500" y="-5" width="5" height="3" fill="#5a7ab8"/><rect x="-1.500" y="-1" width="8" height="8" fill="#e8e8e8"/><rect x="0.500" y="1.500" width="4" height="3.500" fill="#c82828"/></svg>
<svg style="left:497px;top:63.8px" width="3" height="3"><path d="M3 0V3H0Z" fill="#ddd"/></svg>
<svg style="left:502.4px;top:49.7px" width="16.2" height="16.2" viewBox="-9 -9 18 18"><rect x="-6.500" y="-6.500" width="13" height="10" fill="none" stroke="#c82828" stroke-width="1.200" stroke-dasharray="2 1.200"/><rect x="-1" y="-1.500" width="8" height="8" fill="#111"/><circle cx="-3" cy="2.500" r="4.300" fill="#3a8ae0"/></svg>
<div style="left:522.5px;top:50px;width:1px;height:15px;background:#2e2e2e;"></div>
<svg style="left:526.9px;top:49.7px" width="16.2" height="16.2" viewBox="-9 -9 18 18"><rect x="-6.500" y="-6" width="7" height="12.500" fill="#c8ccd4"/><rect x="-4.500" y="-7.500" width="3" height="2.500" fill="#aaa"/><rect x="1.500" y="-1" width="6" height="7.500" fill="#9aa8c0"/><rect x="3" y="1.500" width="3" height="2.500" fill="#c82828"/></svg>
<svg style="left:546.7px;top:49.7px" width="16.2" height="16.2" viewBox="-9 -9 18 18"><circle r="6.500" fill="none" stroke="#8a8a8a" stroke-width="1.300"/><text x="-2.600" y="3.500" font-size="9.500" fill="#8a8a8a" font-family="Liberation Sans, sans-serif">?</text></svg>
<div style="left:172px;top:65.5px;width:215.5px;height:60px;background:radial-gradient(ellipse 75px 10px at 66px 8px,rgba(255,255,255,.30),rgba(255,255,255,.12) 60%,rgba(255,255,255,0)),linear-gradient(#5c5c5c,#4e4e4e 18px,#484848);border:1px solid #7c7c7c;border-radius:4px 4px 0 0;box-shadow:0 0 4px rgba(0,0,0,.6);"></div>
<div style="left:176px;top:68px;width:9.5px;height:11px;background:#e8f4f2;border-radius:1px;"></div>
<span style="left:178.2px;top:68.3px;font-size:9px;line-height:10.8px;color:#1a9a90;font-weight:700;">3</span>
<span style="left:189.0px;top:69.0px;font-size:8px;line-height:9.6px;color:#0c0c0c;letter-spacing:-0.50px;text-shadow:0 0 3px rgba(255,255,255,.55);">Render Setup: V-Ray RT 3.60.03</span>
<div style="left:300px;top:70px;width:12px;height:5px;background:rgba(255,255,255,.18);border-radius:2px;filter:blur(1px);"></div>
<div style="left:322.5px;top:66px;width:58.5px;height:11.5px;background:linear-gradient(#707070,#565656);border:1px solid #8a8a8a;border-top:none;border-radius:0 0 3px 3px;"></div>
<div style="left:340px;top:66px;width:1px;height:11px;background:#858585;"></div>
<div style="left:357.5px;top:66px;width:1px;height:11px;background:#858585;"></div>
<div style="left:327.5px;top:72.5px;width:6.5px;height:2px;background:#f4f4f4;"></div>
<div style="left:345px;top:68.5px;width:7px;height:5.5px;border:1.500px solid #e8e8e8;"></div>
<span style="left:367.0px;top:65.9px;font-size:9px;line-height:10.8px;color:#fff;font-weight:700;">x</span>
<div style="left:176px;top:82.5px;width:208.5px;height:43px;background:#444;border:1px solid #333;"></div>
<div style="left:272px;top:89.5px;width:50.7px;height:11.2px;background:#5c5c5c;"></div>
<span style="left:268.5px;top:90.5px;font-size:8px;line-height:9.6px;color:#e4e4e4;letter-spacing:-0.55px;">ering Mode</span>
<svg style="left:314.5px;top:93.5px;" width="5" height="4" viewBox="0 0 5 4"><path d="M0 0H5L2.500 3.500Z" fill="#eee"/></svg>
<div style="left:272px;top:106.4px;width:50.7px;height:11.2px;background:#5c5c5c;"></div>
<svg style="left:314.5px;top:110.4px;" width="5" height="4" viewBox="0 0 5 4"><path d="M0 0H5L2.500 3.500Z" fill="#eee"/></svg>
<div style="left:327.8px;top:89px;width:50.8px;height:29px;background:#5a5a5a;border-radius:1px;"></div>
<span style="left:341.8px;top:99.2px;font-size:8px;line-height:9.6px;color:#f0f0f0;letter-spacing:-0.62px;">Render</span>
<div style="left:123px;top:123px;width:512.5px;height:432.5px;background:#2b2b2b;border-radius:4px 4px 1px 1px;box-shadow:0 1px 5px rgba(0,0,0,.7);"></div>
<div style="left:123px;top:123px;width:512.5px;height:18px;background:linear-gradient(#4c4c4c,#3e3f40 4px,#38393a 14px,#2e2e2e);border:1px solid #707070;border-bottom:none;border-radius:4px 4px 0 0;"></div>
<div style="left:123px;top:141px;width:4.5px;height:414.5px;background:linear-gradient(90deg,#a8a8a8 0,#7c7c7c 25%,#787878 65%,#cfcfcf 85%,#8a8a8a);"></div>
<div style="left:123px;top:470px;width:4.5px;height:85.5px;background:linear-gradient(rgba(236,236,236,0),rgba(236,236,236,.9) 70%);"></div>
<div style="left:631px;top:141px;width:4.5px;height:414.5px;background:linear-gradient(90deg,#8e8e8e 0,#8e8e8e 1.2px,#4c4c4c 1.6px,#404040 3.5px,#565656 4.5px);"></div>
<div style="left:631px;top:480px;width:4.5px;height:75.5px;background:linear-gradient(rgba(190,190,190,0),rgba(190,190,190,.8) 75%);"></div>
<div style="left:123px;top:551.5px;width:512.5px;height:4px;background:linear-gradient(#8a8a8a,#ececec 40%,#c4c4c4 80%,#6a6a6a);border-radius:0 0 2px 2px;"></div>
<div style="left:127.5px;top:141px;width:503.5px;height:18.5px;background:#3c3c3c;"></div>
<div style="left:133.8px;top:165.6px;width:490.2px;height:367.2px;background:#000;"></div>
<div style="left:127.5px;top:538.5px;width:503.5px;height:13px;background:#2c2c2c;"></div>
<div style="left:325.5px;top:540px;width:280px;height:10.5px;background:#1c1c1c;border:1px solid #3a3a3a;"></div>
<div style="left:330px;top:126px;width:32px;height:6px;background:rgba(255,255,255,.13);border-radius:3px;filter:blur(1.500px);"></div>
<div style="left:567.5px;top:122.5px;width:63px;height:12.5px;background:linear-gradient(#4a4a4a,#2e2e2e);border:1px solid #8a8a8a;border-top:none;border-radius:0 0 3px 3px;"></div>
<div style="left:586.5px;top:123px;width:1px;height:11.5px;background:#7a7a7a;"></div>
<div style="left:603.5px;top:123px;width:1px;height:11.5px;background:#7a7a7a;"></div>
<div style="left:573.5px;top:130px;width:7px;height:2.2px;background:#fff;"></div>
<div style="left:590.5px;top:125.5px;width:8px;height:6.5px;border:2px solid #fff;border-radius:1px;"></div>
<span style="left:614.2px;top:122.6px;font-size:9.5px;line-height:11.4px;color:#fff;font-weight:700;">x</span>
<div style="left:277px;top:142.5px;width:14px;height:15.5px;background:#4f86cf;border:1px solid #3e70b4;"></div>
<span style="left:281.3px;top:145.7px;font-size:8px;line-height:9.6px;color:#a8c8f4;">B</span>
<svg style="left:296px;top:144px" width="12" height="12" viewBox="-6 -6 12 12"><circle r="4.400" fill="#fff"/></svg>
<svg style="left:314.5px;top:144px" width="12" height="12" viewBox="-6 -6 12 12"><circle r="4.200" fill="#9a9a9a"/><circle cx="-1" cy="-1" r="2.200" fill="#c4c4c4"/></svg>
<svg style="left:333px;top:144px" width="12" height="12" viewBox="-6 -6 12 12"><rect x="-4.500" y="-4.500" width="9" height="9" rx="0.800" fill="#b8d0ec"/><rect x="-2.800" y="-4.500" width="5.600" height="3" fill="#4a6a9a"/><rect x="-2.800" y="0.800" width="5.600" height="3.700" fill="#e8eef8"/></svg>
<svg style="left:342px;top:154px" width="3" height="3"><path d="M3 0V3H0Z" fill="#ddd"/></svg>
<svg style="left:351.5px;top:144px" width="12" height="12" viewBox="-6 -6 12 12"><path d="M-5,-3.500H-1L0,-2.300H5V4H-5Z" fill="#e8c060"/><path d="M-5,4L-3.500,-0.800H6L5,4Z" fill="#f4d888"/></svg>
<svg style="left:370px;top:144px" width="12" height="12" viewBox="-6 -6 12 12"><rect x="-3.500" y="-3" width="7" height="7.500" fill="#e4e4e4"/><rect x="-1.500" y="-5" width="3" height="2.500" fill="#ccc"/></svg>
<svg style="left:388.5px;top:144px" width="12" height="12" viewBox="-6 -6 12 12"><circle r="4.400" fill="#8a8a8a"/><path d="M-2,-2L2,2M2,-2L-2,2" stroke="#aaa" stroke-width="1"/></svg>
<svg style="left:406.5px;top:144px" width="12" height="12" viewBox="-6 -6 12 12"><rect x="-5" y="-4.500" width="7.500" height="6.500" fill="#7a70c0"/><path d="M-5,-1.500H2.500M-1.500,-4.500V2" stroke="#c8c0f0" stroke-width="0.700"/><path d="M0,0.500L5,4.500L2.500,4.700V1.500Z" fill="#f4f4f4"/></svg>
<svg style="left:425px;top:144px" width="12" height="12" viewBox="-6 -6 12 12"><path d="M0,-5.500V5.500M-5.500,0H5.500" stroke="#e8b890" stroke-width="2.600"/><circle r="1.600" fill="#333"/></svg>
<svg style="left:443.5px;top:144px" width="12" height="12" viewBox="-6 -6 12 12"><path transform="scale(0.75)" d="M-4.6,-1.2Q-5.6,1.6 -4.2,3.6Q-3.2,5 0,5Q3.200,5 4.200,3.600Q5.600,1.600 4.600,-1.200ZM-3.400,-1.700Q0,-3.600 3.400,-1.700ZM-0.900,-3.300A0.900,0.900 0 1 1 0.900,-3.300ZM-4.800,0.200L-8,-2.200L-7.200,-2.800L-4.300,-1Z" fill="#d0d8e8" stroke="#d0d8e8" stroke-width="0.500"/><path transform="scale(0.75)" d="M4.700,-0.600Q8,-1.200 7.600,1.400Q7.200,3.200 4.600,3.200" fill="none" stroke="#d0d8e8" stroke-width="1.100"/><circle cx="2" cy="2" r="1.800" fill="#3a8ae0"/></svg>
<svg style="left:461.5px;top:144px" width="12" height="12" viewBox="-6 -6 12 12"><rect x="-5.500" y="-4.500" width="11" height="9" fill="#2a6090" stroke="#6ab0e8" stroke-width="1"/><path d="M-3.500,0H3.500M-3.500,0L-1.800,-1.500M-3.500,0L-1.800,1.500M3.500,0L1.800,-1.500M3.500,0L1.800,1.500" stroke="#e8f4ff" stroke-width="0.900" fill="none"/></svg>
<svg style="left:579px;top:144px" width="12" height="12" viewBox="-6 -6 12 12"><path transform="scale(0.8)" d="M-4.6,-1.2Q-5.6,1.6 -4.2,3.6Q-3.2,5 0,5Q3.200,5 4.200,3.600Q5.600,1.600 4.600,-1.200ZM-3.400,-1.700Q0,-3.600 3.400,-1.700ZM-0.900,-3.300A0.900,0.900 0 1 1 0.900,-3.300ZM-4.800,0.200L-8,-2.200L-7.200,-2.800L-4.300,-1Z" fill="#9a9a9a" stroke="#9a9a9a" stroke-width="0.500"/><path transform="scale(0.8)" d="M4.700,-0.600Q8,-1.200 7.600,1.400Q7.200,3.200 4.600,3.200" fill="none" stroke="#9a9a9a" stroke-width="1.100"/><path d="M1.500,2L5,4L1.500,6Z" fill="#bbb"/></svg>
<svg style="left:597px;top:144px" width="12" height="12" viewBox="-6 -6 12 12"><path d="M-2.200,-5.200H2.200L5.200,-2.200V2.200L2.200,5.200H-2.200L-5.200,2.200V-2.200Z" fill="#d03030"/><text x="-4.200" y="1.800" font-size="4.600" font-weight="700" fill="#fff" font-family="Liberation Sans, sans-serif">STOP</text></svg>
<svg style="left:615px;top:144px" width="12" height="12" viewBox="-6 -6 12 12"><path transform="scale(0.8)" d="M-4.6,-1.2Q-5.6,1.6 -4.2,3.6Q-3.2,5 0,5Q3.200,5 4.200,3.600Q5.600,1.600 4.600,-1.200ZM-3.400,-1.700Q0,-3.600 3.400,-1.700ZM-0.900,-3.300A0.900,0.900 0 1 1 0.900,-3.300ZM-4.800,0.200L-8,-2.200L-7.200,-2.800L-4.300,-1Z" fill="#9a9a9a" stroke="#9a9a9a" stroke-width="0.500"/><path transform="scale(0.8)" d="M4.700,-0.600Q8,-1.200 7.600,1.400Q7.200,3.200 4.600,3.200" fill="none" stroke="#9a9a9a" stroke-width="1.100"/></svg>
<svg style="left:127.3px;top:539.5px" width="12" height="12" viewBox="-6 -6 12 12"><g transform="scale(0.86)"><rect x="-4.500" y="-3.500" width="9" height="6.500" fill="#aeb2ba"/><rect x="-4.500" y="-3.500" width="9" height="1.500" fill="#8a8e96"/></g></svg>
<svg style="left:139.59px;top:539.5px" width="12" height="12" viewBox="-6 -6 12 12"><g transform="scale(0.86)"><rect x="-5.500" y="-5.500" width="11" height="11" rx="2.200" fill="#5f8fc4"/><rect x="-3.500" y="-3.500" width="7" height="6.500" fill="none" stroke="#b8d0ec" stroke-width="0.800"/><path d="M-3.500,-1.300H3.500M-1,-3.500V3" stroke="#b8d0ec" stroke-width="0.700"/><path d="M5.500,3V5.500H3Z" fill="#eee"/></g></svg>
<svg style="left:151.88px;top:539.5px" width="12" height="12" viewBox="-6 -6 12 12"><g transform="scale(0.86)"><circle r="4" fill="#8e8e8e"/><circle r="2.600" fill="#b8b8b8"/><rect x="-0.600" y="-1.800" width="1.200" height="3.600" fill="#555"/></g></svg>
<svg style="left:164.17px;top:539.5px" width="12" height="12" viewBox="-6 -6 12 12"><g transform="scale(0.86)"><defs><linearGradient id="rgbg"><stop offset="0" stop-color="#d85828"/><stop offset=".5" stop-color="#e8d8c8"/><stop offset="1" stop-color="#48a8c8"/></linearGradient></defs><rect x="-4.500" y="-4.200" width="9" height="8.400" fill="url(#rgbg)"/></g></svg>
<svg style="left:176.46px;top:539.5px" width="12" height="12" viewBox="-6 -6 12 12"><g transform="scale(0.86)"><rect x="-4.500" y="-3.800" width="9" height="7.600" fill="#33363a"/><circle cx="-2" cy="-1.500" r="1.500" fill="#48c848"/><circle cx="1.800" cy="1.600" r="1.500" fill="#d848c8"/><circle cx="2.200" cy="-1.800" r="1.200" fill="#4878d8"/><circle cx="-2" cy="2" r="1.100" fill="#d8c848"/></g></svg>
<svg style="left:188.75px;top:539.5px" width="12" height="12" viewBox="-6 -6 12 12"><g transform="scale(0.86)"><path d="M-4.500,-2H-1" stroke="#e8d838" stroke-width="1.600"/><path d="M0,-2H4.500" stroke="#68c848" stroke-width="1.600"/><path d="M-4.500,1.500H1" stroke="#e8e8e8" stroke-width="1.600"/><path d="M2,1.500H4.500" stroke="#48c8b8" stroke-width="1.600"/></g></svg>
<svg style="left:201.04px;top:539.5px" width="12" height="12" viewBox="-6 -6 12 12"><g transform="scale(0.86)"><path d="M-4.500,4V0L-3,-2L-1.500,1L0,-4L1.500,0L3,-2.500L4.500,1V4Z" fill="#8a8a8a"/></g></svg>
<svg style="left:213.33px;top:539.5px" width="12" height="12" viewBox="-6 -6 12 12"><g transform="scale(0.86)"><rect x="-4.200" y="-4.200" width="8.400" height="8.400" fill="#5a6238"/><path d="M-4.200,1L1,-4.200M-4.200,4.200L4.200,-4.200M-1,4.200L4.200,-1" stroke="#8a9458" stroke-width="1.100"/></g></svg>
<svg style="left:225.62px;top:539.5px" width="12" height="12" viewBox="-6 -6 12 12"><g transform="scale(0.86)"><circle r="3.300" fill="none" stroke="#8c8c8c" stroke-width="1.500" stroke-dasharray="1.700 1"/></g></svg>
<svg style="left:237.91px;top:539.5px" width="12" height="12" viewBox="-6 -6 12 12"><g transform="scale(0.86)"><rect x="-4.500" y="-4" width="9" height="8" fill="#58a858"/><rect x="-4.500" y="-4" width="9" height="2.500" fill="#88c868"/><path d="M-4.500,4L-1,0L1.500,2.500L3,1L4.500,2.500V4Z" fill="#3a8a3a"/></g></svg>
<svg style="left:250.2px;top:539.5px" width="12" height="12" viewBox="-6 -6 12 12"><g transform="scale(0.86)"><rect x="-5.500" y="-5.500" width="11" height="11" rx="2.200" fill="#5a8fd6"/><path d="M-3.500,4Q-3,-3 4,-3.500" fill="none" stroke="#e8f0ff" stroke-width="1.300"/><path d="M5.500,3V5.500H3Z" fill="#eee"/></g></svg>
<svg style="left:262.49px;top:539.5px" width="12" height="12" viewBox="-6 -6 12 12"><g transform="scale(0.86)"><rect x="-4.500" y="-3.500" width="9" height="7" fill="none" stroke="#8a9ab0" stroke-width="0.900"/><path d="M-4.500,-1H4.500M-1.500,-3.500V3.500M1.500,-3.500V3.500" stroke="#8a9ab0" stroke-width="0.800"/><path d="M5.500,3V5.500H3Z" fill="#ddd"/></g></svg>
<svg style="left:274.78px;top:539.5px" width="12" height="12" viewBox="-6 -6 12 12"><g transform="scale(0.86)"><path d="M-2.500,-3.800V3.800M2.500,-3.800V3.800M-2.500,0H2.500" stroke="#9a9a9a" stroke-width="1.300" fill="none"/></g></svg>
<svg style="left:287.07px;top:539.5px" width="12" height="12" viewBox="-6 -6 12 12"><g transform="scale(0.86)"><path d="M-4.500,-2.500L-1,0L-4.500,2.500ZM4.500,-2.500L1,0L4.500,2.500Z" fill="#d83838"/><path d="M0,-4V4" stroke="#d83838" stroke-width="1"/></g></svg>
<svg style="left:299.36px;top:539.5px" width="12" height="12" viewBox="-6 -6 12 12"><g transform="scale(0.86)"><rect x="-4" y="-4" width="2.600" height="8" fill="#d84848"/><rect x="-0.500" y="-4" width="2.600" height="8" fill="#38b8d8"/><path d="M5.500,3V5.500H3Z" fill="#eee"/></g></svg>
<svg style="left:311.65px;top:539.5px" width="12" height="12" viewBox="-6 -6 12 12"><g transform="scale(0.86)"><rect x="-3.500" y="-3.500" width="7" height="7" fill="none" stroke="#7a7a7a" stroke-width="0.900"/><path d="M-1.800,0H1.800M0,-1.800V1.800" stroke="#8a8a8a" stroke-width="0.900"/></g></svg>
<span style="left:327.0px;top:540.6px;font-size:7.8px;line-height:9.36px;color:#f0f0f0;letter-spacing:-0.40px;">Rendering image (pass 59) [00:00:02,7] [00:01:30,5 est]</span>
<div style="left:326.5px;top:540.5px;width:1px;height:10px;background:#ddd;"></div>
<div style="left:607.5px;top:541.5px;width:7px;height:7px;background:#3a6a4a;border:1px solid #9ac8a8;"></div>
<svg style="left:621.5px;top:541.5px;" width="7" height="7" viewBox="0 0 7 7"><path d="M1,0.500L3.500,3L6,0.500M1,3.500L3.500,6L6,3.500" fill="none" stroke="#ccc" stroke-width="1"/></svg>
<div style="left:77px;top:77px;width:195px;height:146.5px;background:radial-gradient(ellipse 52px 11px at 44px 9px,rgba(236,238,240,.95),rgba(236,238,240,.55) 60%,rgba(236,238,240,0)),linear-gradient(#b4b6b8,#7e8288 7px,#73777d 17px,#c8ccd0 19px,#d4d8dc);border:1px solid #4a4a4a;border-radius:5px;box-shadow:0 1px 6px rgba(0,0,0,.75);"></div>
<div style="left:78px;top:78px;width:193px;height:144px;border:1px solid rgba(255,255,255,.75);border-radius:4px;"></div>
<div style="left:83.5px;top:81.5px;width:7.5px;height:8px;background:#f4f8f4;border:1px solid #8a9a8a;"></div>
<div style="left:84.5px;top:83px;width:2.5px;height:5px;background:#3a7a5a;"></div>
<span style="left:95.5px;top:82.0px;font-size:8.2px;line-height:9.84px;color:#000;letter-spacing:-0.60px;text-shadow:0 0 3px #fff,0 0 5px #fff,0 0 7px rgba(255,255,255,.8);">V-Ray messages</span>
<div style="left:204.3px;top:77.5px;width:63px;height:11px;background:linear-gradient(#b4b8bc,#868a90 48%,#74787e 52%,#8e9298);border:1px solid #6a6a6a;border-top:none;border-radius:0 0 3px 3px;"></div>
<div style="left:238.3px;top:77.5px;width:29px;height:11px;background:linear-gradient(#e8a090,#d04a34 45%,#c02c18 55%,#d85840);border:1px solid #6a2a22;border-top:none;border-radius:0 0 3px 0;"></div>
<div style="left:221px;top:78px;width:1px;height:10px;background:#7a7a7a;"></div>
<div style="left:209.5px;top:84px;width:7px;height:2px;background:#fff;box-shadow:0 0 1px #444;"></div>
<div style="left:226px;top:80.5px;width:7.5px;height:5.5px;border:1.500px solid #fff;box-shadow:0 0 1px #444;"></div>
<span style="left:250.3px;top:77.1px;font-size:9px;line-height:10.8px;color:#fff;font-weight:700;text-shadow:0 0 1px #400;">x</span>
<div style="left:78px;top:96px;width:3.5px;height:122px;background:linear-gradient(#9ea2a6,#a8acb0 40%,#d0d4d8);"></div>
<div style="left:267px;top:96px;width:4px;height:122px;background:linear-gradient(#a8acb0,#b4b8bc 40%,#d0d4d8);"></div>
<div style="left:81.5px;top:95.5px;width:185.5px;height:122px;background:#444;border:1px solid #6a6a6a;"></div>
<div style="left:82.500px;top:96.500px;width:173.500px;height:110px;overflow:hidden;">
<span style="left:0.5px;top:-0.2px;font-size:7.4px;line-height:8.88px;color:#d6d6d6;letter-spacing:-0.54px;">50 % completed.</span>
<span style="left:0.5px;top:7.7px;font-size:7.4px;line-height:8.88px;color:#d6d6d6;letter-spacing:-0.54px;">60 % completed.</span>
<span style="left:0.5px;top:15.6px;font-size:7.4px;line-height:8.88px;color:#d6d6d6;letter-spacing:-0.54px;">70 % completed.</span>
<span style="left:0.5px;top:23.5px;font-size:7.4px;line-height:8.88px;color:#d6d6d6;letter-spacing:-0.54px;">80 % completed.</span>
<span style="left:0.5px;top:31.4px;font-size:7.4px;line-height:8.88px;color:#d6d6d6;letter-spacing:-0.54px;">90 % completed.</span>
<span style="left:0.5px;top:39.4px;font-size:7.4px;line-height:8.88px;color:#d6d6d6;letter-spacing:-0.44px;">Average rays per light cache sample: 4,30 (min 1, max 255)</span>
<span style="left:0.5px;top:47.3px;font-size:7.4px;line-height:8.88px;color:#d6d6d6;letter-spacing:-0.42px;">Using premultiplied light cache.</span>
<span style="left:0.5px;top:55.2px;font-size:7.4px;line-height:8.88px;color:#9aaa92;letter-spacing:-0.47px;">Rendering image...</span>
<div style="left:0px;top:63.76px;width:173.5px;height:7.6px;background:#74cf74;"></div>
<span style="left:0.5px;top:63.1px;font-size:7.4px;line-height:8.88px;color:#1a5a1a;letter-spacing:-0.55px;">warning: Bitmap file &quot;Steel_Diffuse.jpg&quot; failed to load: ▯ ▯▯▯▯▯▯</span>
<span style="left:0.5px;top:71.0px;font-size:7.4px;line-height:8.88px;color:#d6d6d6;letter-spacing:-0.40px;">Noise threshold lowered to 0,142857 with 0,6 percent active</span>
<span style="left:0.5px;top:79.0px;font-size:7.4px;line-height:8.88px;color:#d6d6d6;letter-spacing:-0.40px;">Noise threshold lowered to 0,090909 with 0,3 percent active</span>
<span style="left:0.5px;top:86.9px;font-size:7.4px;line-height:8.88px;color:#d6d6d6;letter-spacing:-0.40px;">Noise threshold lowered to 0,052632 with 0,3 percent active</span>
<span style="left:0.5px;top:94.8px;font-size:7.4px;line-height:8.88px;color:#d6d6d6;letter-spacing:-0.40px;">Noise threshold lowered to 0,028571 with 0,5 percent active</span>
<span style="left:0.5px;top:102.7px;font-size:7.4px;line-height:8.88px;color:#d6d6d6;letter-spacing:-0.40px;">Noise threshold lowered to 0.014925 with 0.6 percent active</span>
</div>
<div style="left:256px;top:96.5px;width:10px;height:110px;background:#f0f0f0;border-left:1px solid #ccc;"></div>
<svg style="left:258.5px;top:99.5px;" width="5" height="4" viewBox="0 0 5 4"><path d="M0,3.500H5L2.500,0Z" fill="#333"/></svg>
<svg style="left:258.5px;top:200.5px;" width="5" height="4" viewBox="0 0 5 4"><path d="M0,0H5L2.500,3.500Z" fill="#333"/></svg>
<div style="left:256.5px;top:187.5px;width:9px;height:9px;background:linear-gradient(90deg,#f8f8f8,#d4d4d4);border:1px solid #9a9a9a;border-radius:1px;"></div>
<div style="left:82.5px;top:206.5px;width:183.5px;height:10px;background:#f0f0f0;"></div>
<svg style="left:85.5px;top:209px;" width="4" height="5" viewBox="0 0 4 5"><path d="M4,0V5L0.500,2.500Z" fill="#333"/></svg>
<svg style="left:249px;top:209px;" width="4" height="5" viewBox="0 0 4 5"><path d="M0,0V5L3.500,2.500Z" fill="#333"/></svg>
<div style="left:93px;top:207.5px;width:11px;height:8px;background:linear-gradient(#f8f8f8,#d4d4d4);border:1px solid #9a9a9a;border-radius:1px;"></div>
<span style="left:96.2px;top:207.9px;font-size:5.5px;line-height:6.6px;color:#666;">ııı</span>
<div style="left:706px;top:52px;width:237px;height:148.7px;background:radial-gradient(ellipse 62px 10px at 48px 9px,rgba(255,255,255,.32),rgba(255,255,255,.12) 60%,rgba(255,255,255,0)),linear-gradient(#5e5e5e,#505050 18px,#4a4a4a);border:1px solid #8a8a8a;border-radius:5px;box-shadow:0 1px 6px rgba(0,0,0,.75);"></div>
<div style="left:707px;top:53px;width:235px;height:146.7px;border:1px solid rgba(255,255,255,.18);border-radius:4px;"></div>
<div style="left:711px;top:55.8px;width:9px;height:10px;background:#e8f4f2;border-radius:1px;"></div>
<span style="left:713.1px;top:55.9px;font-size:8.5px;line-height:10.2px;color:#1a9a90;font-weight:700;">3</span>
<span style="left:723.5px;top:55.8px;font-size:8.4px;line-height:10.08px;color:#000;letter-spacing:-0.46px;text-shadow:0 0 3px rgba(255,255,255,.6);">Rendering - test.avi</span>
<div style="left:911.5px;top:52.5px;width:26.5px;height:10.5px;background:linear-gradient(#6a6a6a,#505050);border:1px solid #8c8c8c;border-top:none;border-radius:0 0 3px 3px;"></div>
<span style="left:922.5px;top:51.8px;font-size:9px;line-height:10.8px;color:#fff;font-weight:700;">x</span>
<div style="left:709.5px;top:68.5px;width:230px;height:128px;background:#444;border:1px solid #2e2e2e;"></div>
<span style="left:715.0px;top:79.1px;font-size:7.7px;line-height:9.24px;color:#f0f0f0;letter-spacing:-0.42px;">Total Animation:</span>
<div style="left:854.3px;top:75.2px;width:33.8px;height:11px;background:#5e5e5e;border-radius:1px;"></div>
<span style="left:863.3px;top:76.2px;font-size:7.7px;line-height:9.24px;color:#f0f0f0;">Stop</span>
<div style="left:895.8px;top:75.2px;width:33.9px;height:11px;background:#5e5e5e;border-radius:1px;"></div>
<span style="left:900.8px;top:76.2px;font-size:7.7px;line-height:9.24px;color:#f0f0f0;">Cancel</span>
<div style="left:715px;top:91px;width:219px;height:10px;background:linear-gradient(#f4f4f4,#d0d0d0 45%,#c4c4c4 55%,#e4e4e4);border:1px solid #9a9a9a;border-radius:1px;"></div>
<div style="left:716px;top:92px;width:7.5px;height:8px;background:linear-gradient(#8ae88a,#18b818 50%,#10a010 55%,#48d048);"></div>
<span style="left:715.0px;top:104.7px;font-size:7.7px;line-height:9.24px;color:#f0f0f0;letter-spacing:-0.43px;">Current Task:</span>
<span style="left:762.4px;top:104.7px;font-size:7.7px;line-height:9.24px;color:#f0f0f0;letter-spacing:-0.37px;">Rendering image (pass 59) [00:00:02,7] [00:01:30,5 est</span>
<div style="left:715px;top:116px;width:219px;height:9.8px;background:linear-gradient(#f4f4f4,#d0d0d0 45%,#c4c4c4 55%,#e4e4e4);border:1px solid #9a9a9a;border-radius:1px;"></div>
<div style="left:716.400px;top:135.700px;width:215px;height:49px;overflow:hidden;background:#4d4d4d;border-radius:2px;">
<svg style="left:4px;top:5px;" width="5" height="4" viewBox="0 0 5 4"><path d="M0 0H5L2.500 3.500Z" fill="#ddd"/></svg>
<span style="left:10.6px;top:1.2px;font-size:8px;line-height:9.6px;color:#fff;letter-spacing:-0.38px;font-weight:700;">Common Parameters</span>
<div style="left:201px;top:3px;width:3px;height:3px;background:#5e5e5e;"></div>
<div style="left:9px;top:17px;width:193.5px;height:40px;border:1px solid #5c5c5c;"></div>
<span style="left:11.4px;top:12.3px;font-size:7.7px;line-height:9.24px;color:#f0f0f0;letter-spacing:-0.53px;background:#4d4d4d;">Rendering Progress:</span>
<span style="left:12.1px;top:23.7px;font-size:7.7px;line-height:9.24px;color:#f0f0f0;letter-spacing:-0.49px;">Frame #</span>
<span style="left:42.4px;top:21.9px;font-size:7.7px;line-height:9.24px;color:#f0f0f0;">1</span>
<span style="left:115.4px;top:22.4px;font-size:7.7px;line-height:9.24px;color:#f0f0f0;letter-spacing:-0.57px;">Last Frame Time:</span>
<span style="left:170.3px;top:22.4px;font-size:7.7px;line-height:9.24px;color:#f0f0f0;letter-spacing:-0.35px;">0:00:10</span>
<span style="left:28.3px;top:34.1px;font-size:7.7px;line-height:9.24px;color:#f0f0f0;letter-spacing:-0.35px;">2 of 21</span>
<span style="left:72.6px;top:32.9px;font-size:7.7px;line-height:9.24px;color:#f0f0f0;letter-spacing:-0.25px;">Total</span>
<span style="left:125.8px;top:34.1px;font-size:7.7px;line-height:9.24px;color:#f0f0f0;letter-spacing:-0.65px;">Elapsed Time:</span>
<span style="left:170.3px;top:34.1px;font-size:7.7px;line-height:9.24px;color:#f0f0f0;letter-spacing:-0.35px;">0:00:10</span>
<span style="left:12.1px;top:45.9px;font-size:7.7px;line-height:9.24px;color:#f0f0f0;">Pass #  1/1</span>
<span style="left:118.1px;top:45.9px;font-size:7.7px;line-height:9.24px;color:#f0f0f0;letter-spacing:-0.66px;">Time Remaining:</span>
<span style="left:170.3px;top:45.9px;font-size:7.7px;line-height:9.24px;color:#f0f0f0;letter-spacing:-0.35px;">0:03:22</span>
</div>
<div style="left:932px;top:136px;width:3px;height:49px;background:#3c3c3c;"></div>
<div style="left:932px;top:136px;width:3px;height:18px;background:#555;"></div>
<div style="left:227.5px;top:638px;width:35px;height:24px;background:linear-gradient(rgba(255,255,255,.42),rgba(255,255,255,.22) 45%,rgba(255,255,255,.10) 50%,rgba(255,255,255,.2));border:1px solid rgba(20,10,10,.7);border-radius:2px;box-shadow:inset 0 0 0 1px rgba(255,255,255,.35);"></div>
<div style="left:265px;top:638px;width:35px;height:24px;background:linear-gradient(rgba(255,255,255,.42),rgba(255,255,255,.22) 45%,rgba(255,255,255,.10) 50%,rgba(255,255,255,.2));border:1px solid rgba(20,10,10,.7);border-radius:2px;box-shadow:inset 0 0 0 1px rgba(255,255,255,.35);"></div>
<div style="left:304px;top:638px;width:33.5px;height:24px;background:linear-gradient(rgba(255,255,255,.42),rgba(255,255,255,.22) 45%,rgba(255,255,255,.10) 50%,rgba(255,255,255,.2));border:1px solid rgba(20,10,10,.7);border-radius:2px;box-shadow:inset 0 0 0 1px rgba(255,255,255,.35);"></div>
<div style="left:341px;top:638px;width:34px;height:24px;background:linear-gradient(rgba(255,255,255,.72),rgba(255,255,255,.5) 45%,rgba(255,255,255,.38) 50%,rgba(255,255,255,.55));border:1px solid rgba(20,10,10,.7);border-radius:2px;box-shadow:inset 0 0 0 1px rgba(255,255,255,.35);"></div>
<div style="left:378.5px;top:638px;width:34px;height:24px;background:linear-gradient(rgba(255,255,255,.42),rgba(255,255,255,.22) 45%,rgba(255,255,255,.10) 50%,rgba(255,255,255,.2));border:1px solid rgba(20,10,10,.7);border-radius:2px;box-shadow:inset 0 0 0 1px rgba(255,255,255,.35);"></div>
<svg style="left:4.5px;top:638px" width="24" height="24" viewBox="-12 -12 24 24"><circle r="11.500" fill="#1c4a8a"/><circle r="10.500" fill="#2a6ac0"/><ellipse cx="0" cy="-4.500" rx="8.500" ry="5.500" fill="#7ab0e8" opacity=".7"/><path d="M-5.500,-4.500Q-3,-6 -0.800,-4.500V-0.300Q-3,-1.800 -5.500,-0.300Z" fill="#e85a28"/><path d="M0.600,-4.500Q3,-3 5.500,-4.500V-0.300Q3,1.200 0.600,-0.300Z" fill="#7ac840"/><path d="M-5.500,0.800Q-3,-0.700 -0.800,0.800V5Q-3,3.500 -5.500,5Z" fill="#3a9ae8"/><path d="M0.600,0.800Q3,2.300 5.500,0.800V5Q3,6.500 0.600,5Z" fill="#f0c828"/></svg>
<svg style="left:43px;top:637.5px" width="24" height="24" viewBox="-12 -12 24 24"><circle r="9" fill="#e8601c"/><circle cx="1" cy="0.500" r="6" fill="#f8a828"/><circle cx="0" cy="-1" r="4.200" fill="#3a4ab8"/><path d="M-8,-2Q-4,2 2,1Q-1,6 -7,4Z" fill="#e84a1c"/></svg>
<svg style="left:80.5px;top:637.5px" width="24" height="24" viewBox="-12 -12 24 24"><circle r="7.500" fill="none" stroke="#3aa0e8" stroke-width="3.600"/><path d="M-6,0.500H6" stroke="#3aa0e8" stroke-width="2.600"/><path d="M3,3.500H8" stroke="#4a3a30" stroke-width="3.500"/><path d="M-10,7Q-4,-9 10,-8" fill="none" stroke="#f0c030" stroke-width="1.800"/></svg>
<svg style="left:117px;top:637.5px" width="24" height="24" viewBox="-12 -12 24 24"><rect x="-8" y="-8.500" width="16" height="17" rx="1.500" fill="#8ab4e0"/><rect x="-6.500" y="-7" width="13" height="14" fill="#c8dcf0"/><circle cx="0" cy="0.500" r="5.500" fill="#f08a20"/><path d="M-1.800,-2.500V3.500L3.200,0.500Z" fill="#fff"/></svg>
<svg style="left:156.5px;top:637.5px" width="24" height="24" viewBox="-12 -12 24 24"><path d="M-10,-5.500L-7,-7L4,3.500V-9L10,-6.500V7L4,9.500L-7,-1V7.500L-10,6Z" fill="#8a50b0"/><path d="M4,-9L-7,2.500L-10,0.500L4,-3Z" fill="#a070c8"/></svg>
<svg style="left:194px;top:636.5px" width="24" height="24" viewBox="-12 -12 24 24"><rect x="-2" y="-9" width="11" height="17" fill="#f4f4f8"/><rect x="-9" y="-8" width="13" height="13" fill="#2a5ab8"/><text x="-8.200" y="3" font-size="11" font-weight="700" fill="#fff" font-family="Liberation Sans, sans-serif">W</text></svg>
<svg style="left:233px;top:638px" width="24" height="24" viewBox="-12 -12 24 24"><circle r="9" fill="#e8433a"/><path d="M0,0L-7.800,-4.500A9,9 0 0 0 -1,8.950Z" fill="#34a853"/><path d="M0,0L-1,8.950A9,9 0 0 0 8.700,-2.300Z" fill="#fbbc05"/><path d="M0,0L8.700,-2.300A9,9 0 0 0 -7.800,-4.500Z" fill="#ea4335"/><circle r="4.200" fill="#fff"/><circle r="3.300" fill="#4285f4"/></svg>
<svg style="left:270.5px;top:638px" width="24" height="24" viewBox="-12 -12 24 24"><circle r="9" fill="#18a8e8"/><circle cx="-4.500" cy="-4.500" r="5" fill="#18a8e8"/><circle cx="4.500" cy="4.500" r="5" fill="#18a8e8"/><text x="-4.300" y="5" font-size="14" font-weight="700" fill="#fff" font-family="Liberation Sans, sans-serif">S</text></svg>
<svg style="left:309px;top:638px" width="24" height="24" viewBox="-12 -12 24 24"><path d="M-9,-7H-3L-1.500,-5H9V-1H-9Z" fill="#e8c868"/><rect x="-9" y="-3.500" width="18" height="11.500" fill="#f4e098"/><rect x="-6" y="1" width="12" height="7" fill="#9ac8e8"/><rect x="-6" y="-1.500" width="12" height="2" fill="#c8d8a8"/></svg>
<svg style="left:346px;top:638px" width="24" height="24" viewBox="-12 -12 24 24"><rect x="-9.500" y="-10" width="19" height="20" rx="1" fill="#e4f2f0"/><text x="-4.700" y="4.500" font-size="15" font-weight="700" fill="#18a098" font-family="Liberation Sans, sans-serif">3</text><rect x="-1" y="6" width="6" height="2" fill="#18a098"/></svg>
<svg style="left:383.5px;top:638px" width="24" height="24" viewBox="-12 -12 24 24"><ellipse cx="-1" cy="1" rx="9" ry="7.500" fill="#f0e8d8"/><circle cx="-5" cy="-1" r="1.700" fill="#e84a3a"/><circle cx="-1.500" cy="-3.500" r="1.700" fill="#3a8ae8"/><circle cx="3" cy="-2.500" r="1.700" fill="#48b848"/><circle cx="-4" cy="3.500" r="1.700" fill="#f0c030"/><path d="M3,5L9,-8" stroke="#c88a48" stroke-width="2"/><path d="M8.500,-7L10,-10" stroke="#f0d030" stroke-width="2"/></svg>
<svg style="left:1064.5px;top:646px;" width="6" height="5" viewBox="0 0 6 5"><path d="M0,4.500H6L3,0.500Z" fill="#f0f0f0"/></svg>
<svg style="left:1076px;top:642.5px;" width="12" height="13" viewBox="0 0 12 13"><path d="M2,1V12" stroke="#f0f0f0" stroke-width="1.300"/><path d="M2.500,1.500H10V7.500H2.500Z" fill="#f4f4f4"/><circle cx="8.500" cy="9" r="3" fill="#d83828"/><path d="M7.200,7.700L9.800,10.300M9.800,7.700L7.200,10.300" stroke="#fff" stroke-width="0.900"/></svg>
<svg style="left:1091.5px;top:643.5px;" width="12" height="11" viewBox="0 0 12 11"><rect x="0.500" y="8" width="1.800" height="2.500" fill="#f0f0f0"/><rect x="3" y="6.500" width="1.800" height="4" fill="#f0f0f0"/><rect x="5.500" y="4.500" width="1.800" height="6" fill="#f0f0f0"/><rect x="8" y="2.500" width="1.800" height="8" fill="#f0f0f0"/></svg>
<svg style="left:1106.5px;top:643px;" width="13" height="12" viewBox="0 0 13 12"><path d="M1,4.500H3.500L7,1.500V10.500L3.500,7.500H1Z" fill="#f4f4f4"/><path d="M8.500,3.500Q10.500,6 8.500,8.500M10,2Q13,6 10,10" fill="none" stroke="#e8e8e8" stroke-width="0.900"/></svg>
<span style="left:1138.5px;top:640.1px;font-size:7.8px;line-height:9.36px;color:#fff;letter-spacing:-0.55px;">9:48</span>
<span style="left:1127.5px;top:650.5px;font-size:7.8px;line-height:9.36px;color:#fff;letter-spacing:-0.40px;">06.08.2018</span>
<div style="left:1172px;top:637.5px;width:8px;height:24.5px;background:linear-gradient(90deg,rgba(255,255,255,.25),rgba(255,255,255,.08));border-left:1px solid rgba(0,0,0,.6);"></div>
<div style="left:1177px;top:13px;width:3px;height:624px;background:linear-gradient(#1c1a16 0,#1c1a14 12%,#2a2a20 18%,#5a5224 28%,#6a5a22 34%,#a8701c 42%,#b86a18 50%,#7a5a20 58%,#6a5226 66%,#3a3224 78%,#2a241e 90%,#241c1a 100%);"></div>
</div></body></html>
